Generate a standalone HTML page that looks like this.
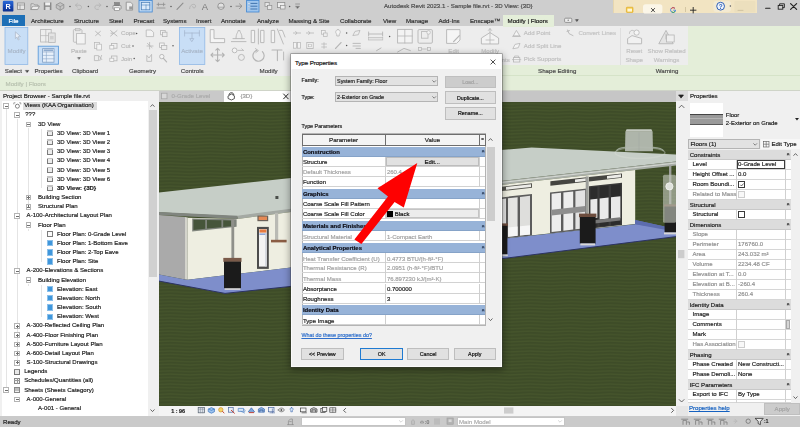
<!DOCTYPE html>
<html><head><meta charset="utf-8"><title>Autodesk Revit - Type Properties</title>
<style>
html,body{margin:0;padding:0;}
body{width:800px;height:427px;overflow:hidden;background:#d9d9d9;font-family:"Liberation Sans",sans-serif;font-size:5.35px;color:#1e1e1e;position:relative;}
.a{position:absolute;box-sizing:border-box;}
.t{position:absolute;white-space:nowrap;line-height:1;-webkit-text-stroke:0.18px currentColor;}
#root{position:absolute;left:0;top:0;width:800px;height:427px;opacity:.999;}
svg{position:absolute;overflow:visible;}
</style></head><body><div id="root">
<div class="a " style="left:0.00px;top:0.00px;width:800.00px;height:14.00px;background:#cecece;"></div>
<div class="a " style="left:0.00px;top:14.00px;width:800.00px;height:12.50px;background:#cecece;"></div>
<div class="a " style="left:0.00px;top:26.00px;width:800.00px;height:50.20px;background:#ededed;"></div>
<div class="a " style="left:687.50px;top:26.00px;width:112.50px;height:52.00px;background:#e4eed9;"></div>
<div class="a " style="left:502.00px;top:65.00px;width:298.00px;height:12.50px;background:#e4eed9;"></div>
<div class="a " style="left:0.00px;top:76.20px;width:800.00px;height:14.00px;background:#e4eed9;"></div>
<div class="a " style="left:0.00px;top:90.00px;width:800.00px;height:0.70px;background:#cfd4c8;"></div>
<div class="a " style="left:0.00px;top:90.50px;width:158.50px;height:10.50px;background:#efefef;"></div>
<div class="a " style="left:0.00px;top:101.00px;width:158.50px;height:315.00px;background:#f0f0f0;"></div>
<div class="a " style="left:1.50px;top:101.00px;width:146.50px;height:315.00px;background:#ffffff;"></div>
<div class="a " style="left:148.00px;top:101.00px;width:9.50px;height:304.50px;background:#f0f0f0;"></div>
<div class="a " style="left:158.50px;top:90.50px;width:529.00px;height:11.20px;background:#c6c6c6;"></div>
<div class="a " style="left:159.00px;top:101.60px;width:517.00px;height:304.00px;background:#3f4d29;overflow:hidden;"><svg class="a" style="left:0;top:0" width="517" height="303.9" viewBox="159 101.6 517 303.9">
<defs>
<pattern id="grass" width="40" height="3.3" patternUnits="userSpaceOnUse">
<rect width="40" height="3.3" fill="#3e4c28"/>
<path d="M0 1.2 Q10 0.4 20 1.2 T40 1.2" stroke="#46552c" stroke-width="1.2" fill="none"/>
</pattern>
</defs>
<rect x="159" y="101" width="517" height="305" fill="url(#grass)"/>
<!-- ===== left building ===== -->
<polygon points="159,192.2 291,177.5 291,209 237.5,216 159,211.8" fill="#c6cec7"/>
<polygon points="159,211.6 237.5,215.4 237.5,218.6 159,214.6" fill="#80857f"/>
<polygon points="237.5,215.4 291,208.3 291,211.6 237.5,218.6" fill="#a4a9a3"/>
<polygon points="159,214.6 185,216.6 185,279 159,274" fill="#aaaaaa"/>
<polygon points="185,216.6 187.8,217 187.8,279.3 185,279" fill="#d4d4cc"/>
<polygon points="187.8,217.4 237.5,218.6 291,211.6 291,267.2 223,275.2 187.8,279.3" fill="#eeeee1"/>
<!-- clerestory left -->
<polygon points="192.2,218 236.6,218.8 236.6,226.4 192.2,231" fill="#7f847c"/>
<polygon points="193.4,219.4 205.2,219.6 205.2,228.4 193.4,229.6" fill="#46553a"/>
<polygon points="207,219.6 221.4,219.8 221.4,226.8 207,228.2" fill="#46553a"/>
<polygon points="223.2,219.8 231,220 231,225.8 223.2,226.6" fill="#46553a"/>
<!-- post & pedestal left -->
<rect x="231.4" y="218.6" width="2.8" height="39.5" fill="#8f908a"/>
<rect x="223.3" y="257.5" width="18.2" height="4" fill="#7a5a49"/>
<rect x="224" y="261.4" width="17" height="26.4" fill="#1b1b1b"/>
<rect x="224.6" y="287.6" width="15.8" height="1.9" fill="#d9d9d9"/>
<!-- light + door -->
<rect x="257.4" y="215.2" width="10.8" height="5.6" fill="#6a6058"/>
<rect x="258.6" y="216.2" width="8.4" height="3.4" fill="#e58a55"/>
<rect x="257" y="226.5" width="11.8" height="42" fill="#4c4c4c"/>
<rect x="259" y="228.6" width="7.8" height="37.6" fill="#f3f3f3"/>
<rect x="259.4" y="229" width="7" height="3.2" fill="#e57a40"/>
<rect x="259.4" y="233" width="7" height="1.6" fill="#8fa6d8"/>
<rect x="265.2" y="233" width="1.4" height="33" fill="#cfd3da"/>
<!-- post2 + shelf -->
<rect x="275" y="212.4" width="3.2" height="27.4" fill="#b9bab4"/>
<rect x="271" y="239.4" width="15.6" height="2.6" fill="#8b5d44"/>
<rect x="275.4" y="195.6" width="3" height="3" fill="#4a4e4a"/>
<!-- slab left -->
<polygon points="159,274 185,279 187.8,279.3 223,275.2 291,267.2 291,286 225,293 159,280.7" fill="#7e8ecb"/>
<polyline points="159,280.7 225,293 291,286" fill="none" stroke="#2b3263" stroke-width="1"/>
<rect x="224.6" y="287.6" width="15.8" height="1.9" fill="#d9d9d9"/>
<rect x="224" y="261.4" width="17" height="26.4" fill="#1b1b1b"/>
<!-- ===== right building ===== -->
<polygon points="501,149.6 531.6,147 676,154 676,161.2 501,180.7" fill="#c6cec7"/>
<polygon points="501,180.7 676,161.2 676,165 501,184.5" fill="#a9aea8"/>
<polygon points="501,181.6 676,162.1 676,163.2 501,182.7" fill="#d6dad4"/>
<g transform="matrix(1 -0.1105 0 1 0 55.36)">
<!-- local: y' = y + (x-501)*0.1105 -->
<rect x="501" y="184.5" width="134.2" height="54" fill="#eeeee1"/>
<!-- upper windows -->
<rect x="502" y="186.4" width="30" height="4.4" fill="#55554f"/>
<rect x="506" y="187.2" width="25" height="2.8" fill="#ecece8"/>
<rect x="550.4" y="186.4" width="36.4" height="4.4" fill="#454541"/>
<rect x="575" y="187.2" width="10.8" height="2.8" fill="#ecece8"/>
<rect x="589" y="186.4" width="33" height="4.4" fill="#454541"/>
<rect x="607" y="187.2" width="14" height="2.8" fill="#ecece8"/>
<!-- lower group 1 -->
<rect x="501" y="197" width="31" height="41.5" fill="#5c5c5c"/>
<rect x="502" y="198.6" width="4" height="38.6" fill="#e6e6e6"/>
<rect x="508" y="198.6" width="9.6" height="38.6" fill="#e4e4e2"/>
<rect x="520" y="198.6" width="10" height="38.6" fill="#dededc"/>
<rect x="508" y="228" width="9.6" height="9.2" fill="#f6f6f6"/>
<rect x="520" y="228" width="10" height="9.2" fill="#f6f6f6"/>
<!-- lower group 2 -->
<rect x="550" y="197.5" width="37" height="41" fill="#5c5c5c"/>
<rect x="551.6" y="199" width="9.4" height="38.2" fill="#ededed"/>
<rect x="563.4" y="199" width="9.8" height="38.2" fill="#ededed"/>
<rect x="575.4" y="199" width="9.8" height="38.2" fill="#e2e2e2"/>
<rect x="551.6" y="215" width="33.6" height="5.6" fill="#8e8e8e"/>
<!-- lower group 3 -->
<rect x="589" y="195.6" width="33" height="42.4" fill="#3a3a3a"/>
<rect x="590.4" y="197" width="7" height="40" fill="#2c2c2c"/>
<rect x="599.6" y="197" width="9" height="40" fill="#2c2c2c"/>
<rect x="611" y="197" width="9.4" height="40" fill="#2c2c2c"/>
<rect x="590.4" y="209" width="7" height="19" fill="#e9e9e9"/>
<rect x="599.6" y="209" width="9" height="21" fill="#e9e9e9"/>
<rect x="611" y="209" width="9.4" height="22" fill="#e9e9e9"/>
<rect x="590.4" y="230" width="30" height="3.4" fill="#777"/>
</g>
<!-- slab right -->
<polygon points="635.2,219.6 676,228.6 676,236.2 635.2,241.4" fill="#6474b6"/>
<polygon points="501,238.7 635.2,223.9 676,229.4 676,236.2 501,258.4" fill="#7e8ecb"/>
<polygon points="635.2,219.6 676,228.6 676,231.4 635.2,223.9" fill="#5c6cae"/>
<polyline points="501,258.4 676,236.2" fill="none" stroke="#2b3263" stroke-width="1"/>
<!-- centre pedestal -->
<rect x="585.7" y="176" width="3" height="37.4" fill="#9c9e9a"/>
<rect x="579" y="213.2" width="17.4" height="3.6" fill="#6d4d3e"/>
<rect x="579.8" y="216.6" width="15.8" height="26.6" fill="#1b1b1b"/>
<rect x="580.4" y="243" width="14.6" height="2" fill="#d9d9d9"/>
<!-- right pedestal -->
<rect x="669" y="165" width="2.4" height="39" fill="#9c9e9a"/>
<rect x="664" y="204" width="12" height="2.4" fill="#6d4d3e"/>
<rect x="664.6" y="206.2" width="11.4" height="26" fill="#1b1b1b"/>
<rect x="664" y="232" width="12" height="2" fill="#d9d9d9"/>
<!-- left pedestal (right bldg) -->
<rect x="501" y="224.6" width="6.4" height="29.6" fill="#1b1b1b"/>
<rect x="501" y="223" width="7" height="2.4" fill="#6d4d3e"/>
<rect x="501" y="254" width="6.8" height="1.8" fill="#d9d9d9"/>
<!-- view cube -->
<ellipse cx="640" cy="152.4" rx="25" ry="5.6" fill="none" stroke="#d9ded8" stroke-width="1.4" opacity=".4"/><path d="M616.4 150.4C617.4 148.6 621 147.4 625 147" stroke="#9aa594" stroke-width="1.4" fill="none"/><path d="M663.6 150.6C662.6 148.8 659 147.4 653 147" stroke="#9aa594" stroke-width="1.4" fill="none"/>
<polygon points="625.4,131.4 652.6,131.4 653,150.8 625,150.8" fill="#b4bab1" opacity=".95"/>
<polygon points="626.6,128.8 651.4,128.8 652.6,131.4 625.4,131.4" fill="#cbd0c8" opacity=".95"/>
<line x1="639" y1="132" x2="639" y2="150.8" stroke="#a5aaa2" stroke-width=".6"/>
<!-- nav bar -->
<rect x="663" y="174.4" width="13" height="48" rx="1.5" fill="#c3c8bd" opacity=".62"/>
<circle cx="669.4" cy="186" r="3.6" fill="#dfe2dc" stroke="#f4f4f0" stroke-width=".8"/>
</svg>
</div>
<div class="a " style="left:676.00px;top:101.00px;width:11.50px;height:304.50px;background:#f0f0f0;"></div>
<div class="a " style="left:158.50px;top:405.50px;width:529.00px;height:10.50px;background:#f4f4f4;"></div>
<div class="a " style="left:687.50px;top:90.50px;width:112.50px;height:325.50px;background:#f0f0f0;"></div>
<div class="a " style="left:0.00px;top:416.00px;width:800.00px;height:11.00px;background:#cacaca;"></div>
<div class="a " style="left:614.00px;top:0.00px;width:143.00px;height:13.20px;background:#f2e4c2;"></div>
<div class="a " style="left:613.40px;top:0.00px;width:0.80px;height:13.20px;background:#e6d6ae;"></div>
<div class="a " style="left:685.00px;top:7.00px;width:0.60px;height:5.00px;background:#d4c6a2;"></div>
<div class="a " style="left:2.20px;top:15.20px;width:22.60px;height:10.40px;background:#1d6fb6;"></div>
<div class="a " style="left:502.70px;top:15.00px;width:51.00px;height:11.60px;background:#e4eed9;"></div>
<div class="a " style="left:620.40px;top:28.00px;width:0.60px;height:36.50px;background:#dedede;"></div>
<div class="a " style="left:502.00px;top:75.20px;width:298.00px;height:0.60px;background:#d5e3c8;"></div>
<div class="a " style="left:159.00px;top:90.80px;width:65.00px;height:10.90px;background:#c9c9c9;"></div>
<div class="a " style="left:224.00px;top:90.80px;width:74.00px;height:10.90px;background:#ffffff;"></div>
<div class="a " style="left:676.00px;top:90.50px;width:11.50px;height:10.50px;background:#dcdcdc;"></div>
<svg style="left:0;top:0" width="800" height="427" viewBox="0 0 800 427"><defs><linearGradient id="rg" x1="0" y1="0" x2="0" y2="1"><stop offset="0" stop-color="#2a6ad8"/><stop offset=".55" stop-color="#1546b4"/><stop offset="1" stop-color="#0c2f8c"/></linearGradient></defs><rect x="2.80" y="0.80" width="10.60" height="10.80" fill="url(#rg)" rx="1.2"/><text x="8" y="8.6" font-size="7.2" font-weight="bold" fill="#fff" text-anchor="middle" font-family="Liberation Sans, sans-serif">R</text><rect x="17.40" y="3.00" width="7.20" height="6.40" fill="#e6e6e6" stroke="#8e8e8e" stroke-width="0.8"/><path d="M17.4 5.0H24.6M20 5.0V9.4" stroke="#8e8e8e" stroke-width="0.7" fill="none" stroke-linecap="round" stroke-linejoin="round"/><path d="M31 9.2V3.8000000000000003H33.6L34.6 5.0H38V6.2" stroke="#8e8e8e" stroke-width="0.8" fill="#e4e4e4" stroke-linecap="round" stroke-linejoin="round"/><path d="M31 9.2L32.6 6.2H39.4L37.8 9.2Z" stroke="#8e8e8e" stroke-width="0.8" fill="#ececec" stroke-linecap="round" stroke-linejoin="round"/><rect x="43.80" y="2.40" width="7.60" height="7.60" fill="#8a8a8a"/><rect x="45.20" y="2.40" width="4.80" height="3.00" fill="#f0f0f0"/><rect x="45.40" y="6.80" width="4.40" height="3.20" fill="#dedede"/><path d="M56.6 4.6L60.2 2.6L63.800000000000004 4.6V8.2L60.2 10.2L56.6 8.2Z" stroke="#8e8e8e" stroke-width="0.8" fill="#c4c4c4" stroke-linecap="round" stroke-linejoin="round"/><path d="M56.6 4.6L60.2 6.6000000000000005L63.800000000000004 4.6M60.2 6.6000000000000005V10.2" stroke="#8e8e8e" stroke-width="0.7" fill="none" stroke-linecap="round" stroke-linejoin="round"/><circle cx="70.00" cy="6.40" r="0.75" fill="#555"/><path d="M75.6 5.2H80A2.2 2.2 0 0 1 80 9.4H78M77.4 3.4000000000000004L75.4 5.2L77.4 7.0" stroke="#b4b4b4" stroke-width="0.9" fill="none" stroke-linecap="round" stroke-linejoin="round"/><circle cx="88.40" cy="6.40" r="0.75" fill="#555"/><path d="M100.80000000000001 5.2H96.4A2.2 2.2 0 0 0 96.4 9.4H98.4M99.0 3.4000000000000004L101.0 5.2L99.0 7.0" stroke="#b4b4b4" stroke-width="0.9" fill="none" stroke-linecap="round" stroke-linejoin="round"/><circle cx="107.00" cy="6.40" r="0.75" fill="#555"/><rect x="113.00" y="5.40" width="8.00" height="3.80" fill="#e9e9e9" stroke="#848484" stroke-width="0.8" rx="0.8"/><rect x="114.60" y="2.60" width="4.80" height="3.00" fill="#8a8a8a" stroke="#7a7a7a" stroke-width="0.6"/><rect x="114.60" y="7.80" width="4.80" height="2.60" fill="#fff" stroke="#848484" stroke-width="0.6"/><path d="M126.6 2.2H130.6L132.6 4.2V10.2H126.6Z" stroke="#8e8e8e" stroke-width="0.8" fill="#ececec" stroke-linecap="round" stroke-linejoin="round"/><rect x="129.20" y="6.40" width="3.60" height="3.20" fill="#9a9a9a"/><rect x="139.00" y="0.40" width="13.20" height="11.60" fill="#bdd7f2" stroke="#3f86d2" stroke-width="0.8"/><rect x="141.40" y="2.60" width="8.40" height="7.20" fill="#dcebfa" stroke="#4a7fb8" stroke-width="0.7"/><path d="M141.4 5H149.8M146 5V9.8" stroke="#4a7fb8" stroke-width="0.6" fill="none" stroke-linecap="round" stroke-linejoin="round"/><path d="M157 4.4H165M157 8H165M158.4 3V5.8M163.6 3V5.8" stroke="#8e8e8e" stroke-width="0.8" fill="none" stroke-linecap="round" stroke-linejoin="round"/><circle cx="171.00" cy="6.40" r="0.75" fill="#555"/><path d="M177 9.4L183 3.2" stroke="#8e8e8e" stroke-width="1.1" fill="none" stroke-linecap="round" stroke-linejoin="round"/><path d="M189.6 8.6C189.6 4 195.6 3 195.6 6.2C195.6 8.4 192.6 8.6 192.6 6.6" stroke="#b0b0b0" stroke-width="0.9" fill="none" stroke-linecap="round" stroke-linejoin="round"/><text x="204.8" y="9.8" font-size="9.4" fill="#7a7a7a" text-anchor="middle" font-family="Liberation Sans, sans-serif">A</text><circle cx="221.00" cy="6.20" r="3.2" fill="#e2e2e2" stroke="#8e8e8e" stroke-width="0.9"/><path d="M218 7.2H224" stroke="#8e8e8e" stroke-width="0.7" fill="none" stroke-linecap="round" stroke-linejoin="round"/><circle cx="231.00" cy="6.40" r="0.75" fill="#555"/><path d="M236 6.2H241.4M239.4 3.8L242 6.2L239.4 8.6" stroke="#8e8e8e" stroke-width="0.9" fill="none" stroke-linecap="round" stroke-linejoin="round"/><rect x="246.60" y="0.40" width="12.40" height="11.60" fill="#9fc6ee" stroke="#3f86d2" stroke-width="0.8"/><path d="M248.6 3.4H257M248.6 6.2H257M248.6 9H257" stroke="#2a5f9e" stroke-width="0.8" fill="none" stroke-linecap="round" stroke-linejoin="round"/><path d="M248.4 3.4H250M248.4 6.2H250M248.4 9H250" stroke="#fff" stroke-width="0.8" fill="none" stroke-linecap="round" stroke-linejoin="round"/><rect x="265.00" y="2.60" width="4.20" height="4.00" fill="#e6e6e6" stroke="#8e8e8e" stroke-width="0.7"/><rect x="267.60" y="5.40" width="4.20" height="4.00" fill="#e6e6e6" stroke="#8e8e8e" stroke-width="0.7"/><rect x="277.40" y="2.40" width="7.40" height="5.20" fill="#ececec" stroke="#8e8e8e" stroke-width="0.8"/><rect x="280.40" y="5.40" width="4.60" height="3.60" fill="#ececec" stroke="#8e8e8e" stroke-width="0.7"/><circle cx="289.60" cy="6.40" r="0.75" fill="#555"/><path d="M295.6 4H299.6" stroke="#8e8e8e" stroke-width="0.8" fill="none" stroke-linecap="round" stroke-linejoin="round"/><path d="M295.6 6.2H299.6L297.6 8.6Z" stroke="#8e8e8e" stroke-width="0.5" fill="#666" stroke-linecap="round" stroke-linejoin="round"/><rect x="626.40" y="7.20" width="6.60" height="5.20" fill="#f6c940" stroke="#d9a520" stroke-width="0.6" rx="0.6"/><rect x="627.40" y="8.60" width="4.60" height="3.00" fill="#fff7d6"/><rect x="643.00" y="4.20" width="19.40" height="9.40" fill="#fbf6e8" rx="2.6"/><path d="M651.4 8.4L654.6 11.8M654.6 8.4L651.4 11.8" stroke="#222" stroke-width="0.8" fill="none" stroke-linecap="round" stroke-linejoin="round"/><path d="M675.6 10.2A2.5 2.5 0 1 1 674.9 8.3" stroke="#4a86e8" stroke-width="1" fill="none"/><path d="M671.2 8.7A2.5 2.5 0 0 1 674.9 8.3" stroke="#e04a3a" stroke-width="1" fill="none"/><path d="M671.6 11.8A2.5 2.5 0 0 0 675.1 11.4" stroke="#3aa757" stroke-width="1" fill="none"/><path d="M673.2 10.2H675.8" stroke="#4a86e8" stroke-width=".9"/><path d="M690.4 10.2H696M693.2 7.4V13" stroke="#222" stroke-width="0.9" fill="none" stroke-linecap="round" stroke-linejoin="round"/><rect x="713.40" y="1.00" width="17.60" height="11.00" fill="#f3ead2" rx="3"/><circle cx="720.60" cy="6.20" r="3.9" fill="#eef3fb" stroke="#2f5fb5" stroke-width="1"/><text x="720.6" y="8.5" font-size="6.4" font-weight="bold" fill="#2f5fb5" text-anchor="middle" font-family="Liberation Sans, sans-serif">?</text><circle cx="730.40" cy="6.00" r="0.75" fill="#555"/><rect x="734.40" y="1.00" width="21.00" height="11.60" fill="#ecdfbd" rx="1"/><path d="M738 10.4H743" stroke="#c9bd9a" stroke-width="0.8" fill="none" stroke-linecap="round" stroke-linejoin="round"/><path d="M765.6 8.2H770" stroke="#222" stroke-width="1.1" fill="none" stroke-linecap="round" stroke-linejoin="round"/><rect x="778.20" y="5.40" width="4.60" height="3.80" fill="none" stroke="#222" stroke-width="0.9"/><path d="M779.6 5.4V3.8H784.4V7.6H782.8" stroke="#222" stroke-width="0.9" fill="none" stroke-linecap="round" stroke-linejoin="round"/><path d="M790.6 3.6L796.6 9.4M796.6 3.6L790.6 9.4" stroke="#222" stroke-width="1.2" fill="none" stroke-linecap="round" stroke-linejoin="round"/><rect x="564.60" y="18.20" width="7.20" height="4.20" fill="#ececec" stroke="#777" stroke-width="0.7" rx="1"/><circle cx="568.20" cy="20.30" r="0.7" fill="#777"/><path d="M575.6 19.6H578.4L577 21.4Z" stroke="#444" stroke-width="0.4" fill="#444" stroke-linecap="round" stroke-linejoin="round"/><rect x="5.00" y="27.40" width="22.80" height="37.00" fill="#c8def6" stroke="#8fb8e6" stroke-width="0.8"/><path d="M15.4 32.2V38.6L17 37.2L18.2 40L19.2 39.5L18 36.8L20.2 36.6Z" stroke="#aab6c6" stroke-width="0.7" fill="#e9eff7" stroke-linecap="round" stroke-linejoin="round"/><rect x="40.60" y="29.40" width="10.60" height="12.60" fill="#eeeeee" stroke="#b6b6b6" stroke-width="0.8"/><path d="M40.6 35.6H51.2M45.8 29.4V42" stroke="#b6b6b6" stroke-width="0.7" fill="none" stroke-linecap="round" stroke-linejoin="round"/><rect x="48.60" y="33.00" width="6.60" height="9.40" fill="#e4e4e4" stroke="#b6b6b6" stroke-width="0.8"/><rect x="50.00" y="36.00" width="3.60" height="3.40" fill="#cfcfcf"/><rect x="38.20" y="46.20" width="20.20" height="18.00" fill="#c8def6" stroke="#5d9ada" stroke-width="0.9"/><rect x="42.60" y="48.60" width="11.40" height="13.60" fill="#e8f0fa" stroke="#7f9fc4" stroke-width="0.8"/><path d="M42.6 52H54M42.6 55.4H54M42.6 58.8H54M46.4 52V62.2" stroke="#8aa6c8" stroke-width="0.6" fill="none" stroke-linecap="round" stroke-linejoin="round"/><rect x="43.60" y="49.40" width="9.40" height="1.80" fill="#8eaacd"/><rect x="73.40" y="29.60" width="8.60" height="12.60" fill="#ebebeb" stroke="#b6b6b6" stroke-width="0.8" rx="0.8"/><rect x="76.60" y="33.40" width="8.60" height="10.60" fill="#f3f3f3" stroke="#b6b6b6" stroke-width="0.8"/><rect x="75.40" y="28.40" width="4.60" height="2.40" fill="#d9d9d9" stroke="#b6b6b6" stroke-width="0.6"/><path d="M77.8 57.6H80.4L79.1 59.2Z" stroke="#555" stroke-width="0.4" fill="#555" stroke-linecap="round" stroke-linejoin="round"/><path d="M95.6 31.4L100.4 35.6M100.4 31.4L95.6 35.6" stroke="#b6b6b6" stroke-width="0.9" fill="none" stroke-linecap="round" stroke-linejoin="round"/><rect x="94.60" y="42.60" width="4.80" height="5.80" fill="#efefef" stroke="#b6b6b6" stroke-width="0.7"/><rect x="96.80" y="44.20" width="4.80" height="5.80" fill="#f5f5f5" stroke="#b6b6b6" stroke-width="0.7"/><path d="M94.8 55.6H98.6V60.6H94.8ZM99.4 56.2L101.8 59.6M101.6 55.4L99.8 60.6" stroke="#b6b6b6" stroke-width="0.8" fill="none" stroke-linecap="round" stroke-linejoin="round"/><path d="M110.6 30.6L117 36M117 30.6L110.6 36M111 33.2H113" stroke="#b6b6b6" stroke-width="0.9" fill="none" stroke-linecap="round" stroke-linejoin="round"/><circle cx="136.60" cy="33.40" r="0.75" fill="#555"/><rect x="111.40" y="43.40" width="5.60" height="4.80" fill="#efefef" stroke="#b6b6b6" stroke-width="0.8"/><rect x="109.80" y="45.60" width="4.00" height="3.40" fill="#f5f5f5" stroke="#b6b6b6" stroke-width="0.7"/><circle cx="133.00" cy="46.00" r="0.75" fill="#555"/><rect x="111.40" y="56.00" width="5.60" height="4.80" fill="#efefef" stroke="#b6b6b6" stroke-width="0.8"/><rect x="109.80" y="58.20" width="4.00" height="3.40" fill="#f5f5f5" stroke="#b6b6b6" stroke-width="0.7"/><circle cx="134.20" cy="58.60" r="0.75" fill="#555"/><path d="M146.6 30H151L153.6 32.4V36.6H146.6Z" stroke="#b6b6b6" stroke-width="0.8" fill="#f3f3f3" stroke-linecap="round" stroke-linejoin="round"/><rect x="160.60" y="30.40" width="4.60" height="4.40" fill="#f3f3f3" stroke="#b6b6b6" stroke-width="0.8"/><rect x="162.40" y="32.20" width="4.60" height="4.40" fill="#ededed" stroke="#b6b6b6" stroke-width="0.8"/><path d="M147.4 43.4L152 47.6M149.6 42.4V49M147 46H153" stroke="#b6b6b6" stroke-width="0.8" fill="none" stroke-linecap="round" stroke-linejoin="round"/><rect x="159.60" y="43.00" width="4.60" height="4.40" fill="#f3f3f3" stroke="#b6b6b6" stroke-width="0.8"/><rect x="161.40" y="45.40" width="5.40" height="4.00" fill="#ededed" stroke="#b6b6b6" stroke-width="0.8"/><circle cx="173.00" cy="45.80" r="0.75" fill="#555"/><path d="M146.8 61V55.4L149 58L151.6 54.4V61Z" stroke="#b6b6b6" stroke-width="0.8" fill="#ededed" stroke-linecap="round" stroke-linejoin="round"/><circle cx="161.80" cy="56.60" r="2.2" fill="#f3f3f3" stroke="#b6b6b6" stroke-width="0.9"/><path d="M163.4 58.4L166.6 61.8" stroke="#b6b6b6" stroke-width="1.2" fill="none" stroke-linecap="round" stroke-linejoin="round"/><rect x="179.40" y="27.40" width="25.40" height="37.00" fill="#c8def6" stroke="#8fb8e6" stroke-width="0.8"/><path d="M184.6 30.6V36M199.4 30.6V36M184.6 33H199.4M192 33V38.6M190.2 38.6H193.8L192 41.4Z" stroke="#a6b8cf" stroke-width="0.8" fill="none" stroke-linecap="round" stroke-linejoin="round"/><path d="M210.6 29.6H214V38.6H224.6V42.6H210.6Z" stroke="#b6b6b6" stroke-width="0.9" fill="#f5f5f5" stroke-linecap="round" stroke-linejoin="round"/><path d="M231.4 41.6H246M233 38.6H244.4M236 38.6C236 33 238 33 238 30.6H240C240 33 242 33 242 38.6" stroke="#b6b6b6" stroke-width="0.9" fill="none" stroke-linecap="round" stroke-linejoin="round"/><path d="M251.6 30.4H254.6V42.6H251.6ZM258.4 29V44M261 30.4H264V42.6H261Z" stroke="#b6b6b6" stroke-width="0.9" fill="#f3f3f3" stroke-linecap="round" stroke-linejoin="round"/><path d="M271.6 30.4H274.6V42.6H271.6ZM277.4 29L283.4 44M279.6 30.4H282.4L285 37" stroke="#b6b6b6" stroke-width="0.9" fill="#f3f3f3" stroke-linecap="round" stroke-linejoin="round"/><path d="M217.6 48.4V61.6M211 55H224.2M215.8 50.2L217.6 48.4L219.4 50.2M215.8 59.8L217.6 61.6L219.4 59.8M212.8 53.2L211 55L212.8 56.8M222.4 53.2L224.2 55L222.4 56.8" stroke="#b2b2b2" stroke-width="1.1" fill="none" stroke-linecap="round" stroke-linejoin="round"/><circle cx="234.60" cy="50.40" r="2.4" fill="#f3f3f3" stroke="#b6b6b6" stroke-width="0.9"/><circle cx="241.40" cy="57.40" r="3" fill="#ececec" stroke="#b6b6b6" stroke-width="0.9"/><path d="M238 50.4H243.4M241.8 48.8L243.4 50.4" stroke="#b6b6b6" stroke-width="0.8" fill="none" stroke-linecap="round" stroke-linejoin="round"/><path d="M262.4 51.6A5.6 5.6 0 1 1 256.6 50.4" stroke="#b6b6b6" stroke-width="1.2" fill="none" stroke-linecap="round" stroke-linejoin="round"/><path d="M255.4 48.6L258.4 50.6L255.8 52.6" stroke="#b6b6b6" stroke-width="0.9" fill="none" stroke-linecap="round" stroke-linejoin="round"/><path d="M272 50H282M277.4 50V60.6" stroke="#b6b6b6" stroke-width="1.1" fill="none" stroke-linecap="round" stroke-linejoin="round"/><path d="M283.6 52V60" stroke="#b6b6b6" stroke-width="0.9" fill="none" stroke-linecap="round" stroke-linejoin="round"/><path d="M293.4 33H300.6M295.6 31.4L297 33L295.6 34.6" stroke="#b6b6b6" stroke-width="0.8" fill="none" stroke-linecap="round" stroke-linejoin="round"/><path d="M306.4 33H313.6M308.6 31.4L310 33L308.6 34.6" stroke="#b6b6b6" stroke-width="0.8" fill="none" stroke-linecap="round" stroke-linejoin="round"/><rect x="321.60" y="30.60" width="3.60" height="3.60" fill="#f3f3f3" stroke="#b6b6b6" stroke-width="0.7"/><rect x="323.60" y="33.00" width="3.60" height="3.60" fill="#ededed" stroke="#b6b6b6" stroke-width="0.7"/><path d="M338 29.6C335.4 29.6 335 33 336.8 34.2V36H339.2V34.2C341 33 340.6 29.6 338 29.6Z" stroke="#b6b6b6" stroke-width="0.8" fill="#f5f5f5" stroke-linecap="round" stroke-linejoin="round"/><circle cx="346.60" cy="33.00" r="0.75" fill="#555"/><path d="M353 35.2L355 31.4L360 30.4L358.4 34.4Z" stroke="#b6b6b6" stroke-width="0.8" fill="#ededed" stroke-linecap="round" stroke-linejoin="round"/><rect x="293.60" y="42.40" width="2.80" height="5.80" fill="#f3f3f3" stroke="#b6b6b6" stroke-width="0.7"/><rect x="297.60" y="42.40" width="2.80" height="5.80" fill="#f3f3f3" stroke="#b6b6b6" stroke-width="0.7"/><rect x="306.80" y="42.40" width="6.40" height="6.00" fill="#f3f3f3" stroke="#b6b6b6" stroke-width="0.8"/><rect x="308.60" y="44.20" width="2.80" height="2.60" fill="none" stroke="#b6b6b6" stroke-width="0.6"/><path d="M321.6 44H326.6M321.6 47H326.6M324 42.6V48.4" stroke="#b6b6b6" stroke-width="0.7" fill="none" stroke-linecap="round" stroke-linejoin="round"/><path d="M335.6 48.4L341 42.6" stroke="#b6b6b6" stroke-width="1.3" fill="none" stroke-linecap="round" stroke-linejoin="round"/><circle cx="346.60" cy="45.60" r="0.75" fill="#555"/><path d="M353 43.4H360.4M353 46H360.4M356 48.4H360.4" stroke="#b6b6b6" stroke-width="0.9" fill="none" stroke-linecap="round" stroke-linejoin="round"/><path d="M368.6 34H382.6M368.6 32V36M382.6 32V36" stroke="#b6b6b6" stroke-width="0.9" fill="none" stroke-linecap="round" stroke-linejoin="round"/><rect x="368.40" y="37.40" width="14.40" height="2.60" fill="#e4e4e4" stroke="#b6b6b6" stroke-width="0.6"/><circle cx="389.60" cy="36.40" r="0.75" fill="#555"/><path d="M376.6 50.6L381 48" stroke="#b6b6b6" stroke-width="0.9" fill="none" stroke-linecap="round" stroke-linejoin="round"/><rect x="397.60" y="29.40" width="14.60" height="13.60" fill="#f3f3f3" stroke="#b6b6b6" stroke-width="0.9"/><path d="M397.6 36H412.2M404.8 29.4V43" stroke="#b6b6b6" stroke-width="0.8" fill="none" stroke-linecap="round" stroke-linejoin="round"/><rect x="418.00" y="29.60" width="14.40" height="13.60" fill="none" stroke="#b6b6b6" stroke-width="0.9" rx="1.2"/><rect x="421.40" y="31.60" width="6.60" height="6.60" fill="#ededed" stroke="#b6b6b6" stroke-width="0.8"/><circle cx="428.60" cy="32.40" r="1.8" fill="#f3f3f3" stroke="#b6b6b6" stroke-width="0.7"/><path d="M397.6 52L404 48.4L410.4 50.6" stroke="#b6b6b6" stroke-width="0.9" fill="none" stroke-linecap="round" stroke-linejoin="round"/><rect x="418.60" y="47.60" width="2.80" height="2.80" fill="none" stroke="#b6b6b6" stroke-width="0.7"/><path d="M422.4 49H426.4" stroke="#b6b6b6" stroke-width="0.7" fill="none" stroke-linecap="round" stroke-linejoin="round"/><rect x="427.60" y="47.60" width="2.80" height="2.80" fill="none" stroke="#b6b6b6" stroke-width="0.7"/><path d="M447 29.6H460V40L456.6 43.4H447Z" stroke="#b6b6b6" stroke-width="0.9" fill="#f5f5f5" stroke-linecap="round" stroke-linejoin="round"/><path d="M453.6 41.6L459.4 35.6" stroke="#b6b6b6" stroke-width="1.3" fill="none" stroke-linecap="round" stroke-linejoin="round"/><path d="M481.4 43.6V38L490 32.6L498.6 38V43.6Z" stroke="#b6b6b6" stroke-width="0.9" fill="#f3f3f3" stroke-linecap="round" stroke-linejoin="round"/><path d="M490 28.6V43.6M488.4 30.4L490 28.6L491.6 30.4M486 40H494" stroke="#b6b6b6" stroke-width="0.8" fill="none" stroke-linecap="round" stroke-linejoin="round"/><path d="M513.4 35.6L516.4 30.4L519.6 35.6ZM512.6 36.4H520.4" stroke="#b6b6b6" stroke-width="0.8" fill="#f5f5f5" stroke-linecap="round" stroke-linejoin="round"/><path d="M513 48.4L515 44.4L520 43.4L518.4 47.4Z" stroke="#b6b6b6" stroke-width="0.8" fill="#f5f5f5" stroke-linecap="round" stroke-linejoin="round"/><rect x="513.40" y="57.60" width="6.40" height="4.40" fill="#f3f3f3" stroke="#b6b6b6" stroke-width="0.8"/><path d="M514.6 57.6V56H518.6V57.6M512.4 59.6H520.8" stroke="#b6b6b6" stroke-width="0.7" fill="none" stroke-linecap="round" stroke-linejoin="round"/><path d="M567.6 30L569 33.6L573 35.6M567 31.4L569.4 30.6" stroke="#b6b6b6" stroke-width="0.9" fill="none" stroke-linecap="round" stroke-linejoin="round"/><path d="M627.6 43.4V38.6L632 35.6L641.6 38.4V43.4Z" stroke="#b6b6b6" stroke-width="0.9" fill="#f1f1f1" stroke-linecap="round" stroke-linejoin="round"/><circle cx="636.60" cy="32.60" r="2.6" fill="#f5f5f5" stroke="#b6b6b6" stroke-width="0.8"/><path d="M629.4 33.4C629.4 30.4 632.6 29.4 634 31" stroke="#b6b6b6" stroke-width="0.8" fill="none" stroke-linecap="round" stroke-linejoin="round"/><path d="M659 43.4L666 30.4L673 43.4Z" stroke="#b6b6b6" stroke-width="0.9" fill="#e4e4e4" stroke-linecap="round" stroke-linejoin="round"/><rect x="666.60" y="35.00" width="7.60" height="7.00" fill="#efefef" stroke="#b6b6b6" stroke-width="0.8"/><path d="M666 34V39" stroke="#b6b6b6" stroke-width="0.9" fill="none" stroke-linecap="round" stroke-linejoin="round"/><path d="M25.6 70.4H28.8L27.2 72.4Z" stroke="#333" stroke-width="0.4" fill="#333" stroke-linecap="round" stroke-linejoin="round"/><rect x="161.60" y="93.20" width="5.40" height="5.60" fill="#d8d8d8" stroke="#a2a2a2" stroke-width="0.7"/><path d="M228.4 95.8L231.4 94L234.4 95.8V98.6L231.4 100L228.4 98.6Z" stroke="#333" stroke-width="0.8" fill="#fff" stroke-linecap="round" stroke-linejoin="round"/><path d="M229 94.6C229 92 233.8 92 233.8 94.6" stroke="#333" stroke-width="0.9" fill="none" stroke-linecap="round" stroke-linejoin="round"/><path d="M283.6 94L288.2 98.8M288.2 94L283.6 98.8" stroke="#111" stroke-width="0.9" fill="none" stroke-linecap="round" stroke-linejoin="round"/><path d="M679 95H683.4L681.2 97.8Z" stroke="#222" stroke-width="0.4" fill="#222" stroke-linecap="round" stroke-linejoin="round"/><path d="M679 95H683.4L681.2 97.8Z" stroke="#222" stroke-width="0.4" fill="#222" stroke-linecap="round" stroke-linejoin="round"/><path d="M679.2 107.6L681.6 105.2L684 107.6" stroke="#444" stroke-width="0.8" fill="none" stroke-linecap="round" stroke-linejoin="round"/><path d="M679.2 399.6L681.6 402L684 399.6" stroke="#444" stroke-width="0.8" fill="none" stroke-linecap="round" stroke-linejoin="round"/><rect x="678.00" y="250.00" width="6.40" height="8.20" fill="#cdcdcd"/></svg>
<div class="t" style="top:2.99px;font-size:6.1px;left:384.00px;color:#4a4a4a;">Autodesk Revit 2023.1 - Sample file.rvt - 3D View: {3D}</div>
<div class="t" style="top:18.05px;font-size:6.2px;left:13.50px;transform:translateX(-50%);color:#ffffff;">File</div>
<div class="t" style="top:18.07px;font-size:6.15px;left:31.00px;color:#303030;">Architecture</div>
<div class="t" style="top:18.07px;font-size:6.15px;left:74.00px;color:#303030;">Structure</div>
<div class="t" style="top:18.07px;font-size:6.15px;left:109.00px;color:#303030;">Steel</div>
<div class="t" style="top:18.07px;font-size:6.15px;left:133.50px;color:#303030;">Precast</div>
<div class="t" style="top:18.07px;font-size:6.15px;left:163.00px;color:#303030;">Systems</div>
<div class="t" style="top:18.07px;font-size:6.15px;left:196.00px;color:#303030;">Insert</div>
<div class="t" style="top:18.07px;font-size:6.15px;left:221.00px;color:#303030;">Annotate</div>
<div class="t" style="top:18.07px;font-size:6.15px;left:257.00px;color:#303030;">Analyze</div>
<div class="t" style="top:18.07px;font-size:6.15px;left:288.50px;color:#303030;">Massing &amp; Site</div>
<div class="t" style="top:18.07px;font-size:6.15px;left:340.00px;color:#303030;">Collaborate</div>
<div class="t" style="top:18.07px;font-size:6.15px;left:383.00px;color:#303030;">View</div>
<div class="t" style="top:18.07px;font-size:6.15px;left:406.00px;color:#303030;">Manage</div>
<div class="t" style="top:18.07px;font-size:6.15px;left:438.50px;color:#303030;">Add-Ins</div>
<div class="t" style="top:18.07px;font-size:6.15px;left:470.00px;color:#303030;">Enscape™</div>
<div class="t" style="top:18.07px;font-size:6.15px;left:507.60px;color:#1e1e1e;">Modify | Floors</div>
<div class="t" style="top:47.79px;font-size:6.1px;left:16.60px;transform:translateX(-50%);color:#a9b7c9;">Modify</div>
<div class="t" style="top:48.39px;font-size:6.1px;left:78.80px;transform:translateX(-50%);color:#b9b9b9;">Paste</div>
<div class="t" style="top:30.39px;font-size:6.1px;left:121.00px;color:#bababa;">Cope</div>
<div class="t" style="top:42.99px;font-size:6.1px;left:121.00px;color:#bababa;">Cut</div>
<div class="t" style="top:55.59px;font-size:6.1px;left:121.00px;color:#bababa;">Join</div>
<div class="t" style="top:47.99px;font-size:6.1px;left:192.00px;transform:translateX(-50%);color:#a9b7c9;">Activate</div>
<div class="t" style="top:48.19px;font-size:6.1px;left:453.60px;transform:translateX(-50%);color:#c2c2c2;">Edit</div>
<div class="t" style="top:48.19px;font-size:6.1px;left:490.20px;transform:translateX(-50%);color:#c2c2c2;">Modify</div>
<div class="t" style="top:56.59px;font-size:6.1px;left:501.60px;color:#c2c2c2;">nts</div>
<div class="t" style="top:30.39px;font-size:6.1px;left:523.80px;color:#c0c0c0;">Add Point</div>
<div class="t" style="top:43.29px;font-size:6.1px;left:523.80px;color:#c0c0c0;">Add Split Line</div>
<div class="t" style="top:56.49px;font-size:6.1px;left:523.80px;color:#c0c0c0;">Pick Supports</div>
<div class="t" style="top:30.39px;font-size:6.1px;left:578.40px;color:#c4c4c4;">Convert Lines</div>
<div class="t" style="top:48.19px;font-size:6.1px;left:634.20px;transform:translateX(-50%);color:#c2c2c2;">Reset</div>
<div class="t" style="top:56.59px;font-size:6.1px;left:634.20px;transform:translateX(-50%);color:#c2c2c2;">Shape</div>
<div class="t" style="top:48.19px;font-size:6.1px;left:666.60px;transform:translateX(-50%);color:#c2c2c2;">Show Related</div>
<div class="t" style="top:56.59px;font-size:6.1px;left:666.60px;transform:translateX(-50%);color:#c2c2c2;">Warnings</div>
<div class="t" style="top:68.27px;font-size:6.15px;left:4.80px;color:#4a4a4a;">Select</div>
<div class="t" style="top:68.27px;font-size:6.15px;left:34.50px;color:#4a4a4a;">Properties</div>
<div class="t" style="top:68.27px;font-size:6.15px;left:72.00px;color:#4a4a4a;">Clipboard</div>
<div class="t" style="top:68.27px;font-size:6.15px;left:129.00px;color:#4a4a4a;">Geometry</div>
<div class="t" style="top:68.27px;font-size:6.15px;left:180.80px;color:#4a4a4a;">Controls</div>
<div class="t" style="top:68.27px;font-size:6.15px;left:259.60px;color:#4a4a4a;">Modify</div>
<div class="t" style="top:68.27px;font-size:6.15px;left:557.20px;transform:translateX(-50%);color:#4a4a4a;">Shape Editing</div>
<div class="t" style="top:68.27px;font-size:6.15px;left:667.00px;transform:translateX(-50%);color:#4a4a4a;">Warning</div>
<div class="t" style="top:80.97px;font-size:6.15px;left:5.60px;color:#b9c2b0;">Modify | Floors</div>
<div class="t" style="top:93.49px;font-size:6.1px;left:171.60px;color:#ababab;">0-Grade Level</div>
<div class="t" style="top:93.49px;font-size:6.1px;left:240.40px;color:#9a9a9a;">{3D}</div>
<div class="t" style="top:93.39px;font-size:6.1px;left:3.00px;color:#222;">Project Browser - Sample file.rvt</div>
<div class="a " style="left:22.50px;top:101.60px;width:74.50px;height:8.80px;background:#dedede;"></div>
<div class="a " style="left:148.60px;top:110.00px;width:8.40px;height:167.00px;background:#d0d0d0;"></div>
<svg style="left:150.2px;top:103.6px" width="5" height="3.2" viewBox="0 0 5 3.2"><path d="M0.5 2.7L2.5 0.6L4.5 2.7" stroke="#444" stroke-width=".8" fill="none"/></svg>
<svg style="left:150.2px;top:408.6px" width="5" height="3.2" viewBox="0 0 5 3.2"><path d="M0.5 0.5L2.5 2.6L4.5 0.5" stroke="#444" stroke-width=".8" fill="none"/></svg>
<div class="a " style="left:6.00px;top:109.47px;width:0.50px;height:280.60px;background:#e4e4e4;"></div>
<div class="a " style="left:17.00px;top:118.64px;width:0.50px;height:243.92px;background:#e4e4e4;"></div>
<div class="a " style="left:28.30px;top:127.81px;width:0.50px;height:1.83px;background:#e4e4e4;"></div>
<div class="a " style="left:40.50px;top:128.72px;width:0.50px;height:59.60px;background:#e4e4e4;"></div>
<div class="a " style="left:28.30px;top:127.81px;width:0.50px;height:78.86px;background:#e4e4e4;"></div>
<div class="a " style="left:28.30px;top:228.68px;width:0.50px;height:1.83px;background:#e4e4e4;"></div>
<div class="a " style="left:40.50px;top:229.59px;width:0.50px;height:32.09px;background:#e4e4e4;"></div>
<div class="a " style="left:40.50px;top:284.62px;width:0.50px;height:32.09px;background:#e4e4e4;"></div>
<div class="a " style="left:28.30px;top:283.70px;width:0.50px;height:1.83px;background:#e4e4e4;"></div>
<div class="a " style="left:3.20px;top:103.20px;width:5.60px;height:5.60px;background:#fff;border:0.6px solid #b4b4b4;"></div>
<div class="a " style="left:4.50px;top:105.70px;width:3.00px;height:0.60px;background:#6e6e6e;"></div>
<div class="t" style="top:102.32px;font-size:6.05px;left:24.20px;color:#1c1c1c;">Views (KAA Organisation)</div>
<div class="a " style="left:14.20px;top:112.37px;width:5.60px;height:5.60px;background:#fff;border:0.6px solid #b4b4b4;"></div>
<div class="a " style="left:15.50px;top:114.87px;width:3.00px;height:0.60px;background:#6e6e6e;"></div>
<div class="t" style="top:111.49px;font-size:6.05px;left:25.20px;color:#1c1c1c;">???</div>
<div class="a " style="left:25.50px;top:121.54px;width:5.60px;height:5.60px;background:#fff;border:0.6px solid #b4b4b4;"></div>
<div class="a " style="left:26.80px;top:124.04px;width:3.00px;height:0.60px;background:#6e6e6e;"></div>
<div class="t" style="top:120.66px;font-size:6.05px;left:38.00px;color:#1c1c1c;">3D View</div>
<div class="a " style="left:46.60px;top:130.11px;width:6.00px;height:6.20px;background:#ececec;border:0.7px solid #7c7c7c;"></div>
<div class="a " style="left:46.60px;top:130.11px;width:6.00px;height:1.60px;background:#c4c4c4;"></div>
<div class="t" style="top:129.83px;font-size:6.05px;left:57.00px;color:#1c1c1c;">3D View: 3D View 1</div>
<div class="a " style="left:46.60px;top:139.28px;width:6.00px;height:6.20px;background:#ececec;border:0.7px solid #7c7c7c;"></div>
<div class="a " style="left:46.60px;top:139.28px;width:6.00px;height:1.60px;background:#c4c4c4;"></div>
<div class="t" style="top:139.00px;font-size:6.05px;left:57.00px;color:#1c1c1c;">3D View: 3D View 2</div>
<div class="a " style="left:46.60px;top:148.45px;width:6.00px;height:6.20px;background:#ececec;border:0.7px solid #7c7c7c;"></div>
<div class="a " style="left:46.60px;top:148.45px;width:6.00px;height:1.60px;background:#c4c4c4;"></div>
<div class="t" style="top:148.17px;font-size:6.05px;left:57.00px;color:#1c1c1c;">3D View: 3D View 3</div>
<div class="a " style="left:46.60px;top:157.62px;width:6.00px;height:6.20px;background:#ececec;border:0.7px solid #7c7c7c;"></div>
<div class="a " style="left:46.60px;top:157.62px;width:6.00px;height:1.60px;background:#c4c4c4;"></div>
<div class="t" style="top:157.34px;font-size:6.05px;left:57.00px;color:#1c1c1c;">3D View: 3D View 4</div>
<div class="a " style="left:46.60px;top:166.79px;width:6.00px;height:6.20px;background:#ececec;border:0.7px solid #7c7c7c;"></div>
<div class="a " style="left:46.60px;top:166.79px;width:6.00px;height:1.60px;background:#c4c4c4;"></div>
<div class="t" style="top:166.51px;font-size:6.05px;left:57.00px;color:#1c1c1c;">3D View: 3D View 5</div>
<div class="a " style="left:46.60px;top:175.96px;width:6.00px;height:6.20px;background:#ececec;border:0.7px solid #7c7c7c;"></div>
<div class="a " style="left:46.60px;top:175.96px;width:6.00px;height:1.60px;background:#c4c4c4;"></div>
<div class="t" style="top:175.68px;font-size:6.05px;left:57.00px;color:#1c1c1c;">3D View: 3D View 6</div>
<div class="a " style="left:46.60px;top:185.13px;width:6.00px;height:6.20px;background:#ececec;border:0.7px solid #7c7c7c;"></div>
<div class="a " style="left:46.60px;top:185.13px;width:6.00px;height:1.60px;background:#c4c4c4;"></div>
<div class="t" style="top:184.85px;font-size:6.05px;left:57.00px;color:#1c1c1c;font-weight:bold;">3D View: {3D}</div>
<div class="a " style="left:25.50px;top:194.90px;width:5.60px;height:5.60px;background:#fff;border:0.6px solid #b4b4b4;"></div>
<div class="a " style="left:26.80px;top:197.40px;width:3.00px;height:0.60px;background:#6e6e6e;"></div>
<div class="a " style="left:28.00px;top:196.20px;width:0.60px;height:3.00px;background:#6e6e6e;"></div>
<div class="t" style="top:194.02px;font-size:6.05px;left:38.00px;color:#1c1c1c;">Building Section</div>
<div class="a " style="left:25.50px;top:204.07px;width:5.60px;height:5.60px;background:#fff;border:0.6px solid #b4b4b4;"></div>
<div class="a " style="left:26.80px;top:206.57px;width:3.00px;height:0.60px;background:#6e6e6e;"></div>
<div class="a " style="left:28.00px;top:205.37px;width:0.60px;height:3.00px;background:#6e6e6e;"></div>
<div class="t" style="top:203.19px;font-size:6.05px;left:38.00px;color:#1c1c1c;">Structural Plan</div>
<div class="a " style="left:14.20px;top:213.24px;width:5.60px;height:5.60px;background:#fff;border:0.6px solid #b4b4b4;"></div>
<div class="a " style="left:15.50px;top:215.74px;width:3.00px;height:0.60px;background:#6e6e6e;"></div>
<div class="t" style="top:212.36px;font-size:6.05px;left:26.60px;color:#1c1c1c;">A-100-Architectural Layout Plan</div>
<div class="a " style="left:25.50px;top:222.41px;width:5.60px;height:5.60px;background:#fff;border:0.6px solid #b4b4b4;"></div>
<div class="a " style="left:26.80px;top:224.91px;width:3.00px;height:0.60px;background:#6e6e6e;"></div>
<div class="t" style="top:221.53px;font-size:6.05px;left:38.00px;color:#1c1c1c;">Floor Plan</div>
<div class="a " style="left:46.60px;top:230.98px;width:6.00px;height:6.20px;background:#fbfbfb;border:0.7px solid #7c7c7c;"></div>
<div class="t" style="top:230.70px;font-size:6.05px;left:57.00px;color:#1c1c1c;">Floor Plan: 0-Grade Level</div>
<div class="a " style="left:46.60px;top:240.15px;width:6.00px;height:6.20px;background:#3f97dc;border:0.6px solid #8cc0ea;"></div>
<div class="t" style="top:239.87px;font-size:6.05px;left:57.00px;color:#1c1c1c;">Floor Plan: 1-Bottom Eave</div>
<div class="a " style="left:46.60px;top:249.32px;width:6.00px;height:6.20px;background:#3f97dc;border:0.6px solid #8cc0ea;"></div>
<div class="t" style="top:249.04px;font-size:6.05px;left:57.00px;color:#1c1c1c;">Floor Plan: 2-Top Eave</div>
<div class="a " style="left:46.60px;top:258.49px;width:6.00px;height:6.20px;background:#3f97dc;border:0.6px solid #8cc0ea;"></div>
<div class="t" style="top:258.21px;font-size:6.05px;left:57.00px;color:#1c1c1c;">Floor Plan: Site</div>
<div class="a " style="left:14.20px;top:268.26px;width:5.60px;height:5.60px;background:#fff;border:0.6px solid #b4b4b4;"></div>
<div class="a " style="left:15.50px;top:270.76px;width:3.00px;height:0.60px;background:#6e6e6e;"></div>
<div class="t" style="top:267.38px;font-size:6.05px;left:26.60px;color:#1c1c1c;">A-200-Elevations &amp; Sections</div>
<div class="a " style="left:25.50px;top:277.43px;width:5.60px;height:5.60px;background:#fff;border:0.6px solid #b4b4b4;"></div>
<div class="a " style="left:26.80px;top:279.93px;width:3.00px;height:0.60px;background:#6e6e6e;"></div>
<div class="t" style="top:276.55px;font-size:6.05px;left:38.00px;color:#1c1c1c;">Building Elevation</div>
<div class="a " style="left:46.60px;top:286.00px;width:6.00px;height:6.20px;background:#3f97dc;border:0.6px solid #8cc0ea;"></div>
<div class="t" style="top:285.72px;font-size:6.05px;left:57.00px;color:#1c1c1c;">Elevation: East</div>
<div class="a " style="left:46.60px;top:295.17px;width:6.00px;height:6.20px;background:#3f97dc;border:0.6px solid #8cc0ea;"></div>
<div class="t" style="top:294.89px;font-size:6.05px;left:57.00px;color:#1c1c1c;">Elevation: North</div>
<div class="a " style="left:46.60px;top:304.34px;width:6.00px;height:6.20px;background:#3f97dc;border:0.6px solid #8cc0ea;"></div>
<div class="t" style="top:304.06px;font-size:6.05px;left:57.00px;color:#1c1c1c;">Elevation: South</div>
<div class="a " style="left:46.60px;top:313.51px;width:6.00px;height:6.20px;background:#3f97dc;border:0.6px solid #8cc0ea;"></div>
<div class="t" style="top:313.23px;font-size:6.05px;left:57.00px;color:#1c1c1c;">Elevation: West</div>
<div class="a " style="left:14.20px;top:323.28px;width:5.60px;height:5.60px;background:#fff;border:0.6px solid #b4b4b4;"></div>
<div class="a " style="left:15.50px;top:325.78px;width:3.00px;height:0.60px;background:#6e6e6e;"></div>
<div class="a " style="left:16.70px;top:324.58px;width:0.60px;height:3.00px;background:#6e6e6e;"></div>
<div class="t" style="top:322.40px;font-size:6.05px;left:26.60px;color:#1c1c1c;">A-300-Reflected Ceiling Plan</div>
<div class="a " style="left:14.20px;top:332.45px;width:5.60px;height:5.60px;background:#fff;border:0.6px solid #b4b4b4;"></div>
<div class="a " style="left:15.50px;top:334.95px;width:3.00px;height:0.60px;background:#6e6e6e;"></div>
<div class="a " style="left:16.70px;top:333.75px;width:0.60px;height:3.00px;background:#6e6e6e;"></div>
<div class="t" style="top:331.57px;font-size:6.05px;left:26.60px;color:#1c1c1c;">A-400-Floor Finishing Plan</div>
<div class="a " style="left:14.20px;top:341.62px;width:5.60px;height:5.60px;background:#fff;border:0.6px solid #b4b4b4;"></div>
<div class="a " style="left:15.50px;top:344.12px;width:3.00px;height:0.60px;background:#6e6e6e;"></div>
<div class="a " style="left:16.70px;top:342.92px;width:0.60px;height:3.00px;background:#6e6e6e;"></div>
<div class="t" style="top:340.74px;font-size:6.05px;left:26.60px;color:#1c1c1c;">A-500-Furniture Layout Plan</div>
<div class="a " style="left:14.20px;top:350.79px;width:5.60px;height:5.60px;background:#fff;border:0.6px solid #b4b4b4;"></div>
<div class="a " style="left:15.50px;top:353.29px;width:3.00px;height:0.60px;background:#6e6e6e;"></div>
<div class="a " style="left:16.70px;top:352.09px;width:0.60px;height:3.00px;background:#6e6e6e;"></div>
<div class="t" style="top:349.91px;font-size:6.05px;left:26.60px;color:#1c1c1c;">A-600-Detail Layout Plan</div>
<div class="a " style="left:14.20px;top:359.96px;width:5.60px;height:5.60px;background:#fff;border:0.6px solid #b4b4b4;"></div>
<div class="a " style="left:15.50px;top:362.46px;width:3.00px;height:0.60px;background:#6e6e6e;"></div>
<div class="a " style="left:16.70px;top:361.26px;width:0.60px;height:3.00px;background:#6e6e6e;"></div>
<div class="t" style="top:359.08px;font-size:6.05px;left:26.60px;color:#1c1c1c;">S-100-Structural Drawings</div>
<div class="a " style="left:14.20px;top:368.73px;width:5.60px;height:5.80px;background:#e8e8e8;border:0.6px solid #777;"></div>
<div class="a " style="left:14.20px;top:368.73px;width:5.60px;height:1.60px;background:#8a8a8a;"></div>
<div class="t" style="top:368.25px;font-size:6.05px;left:24.20px;color:#1c1c1c;">Legends</div>
<div class="a " style="left:14.20px;top:377.90px;width:5.60px;height:5.80px;background:#f4f4f4;border:0.6px solid #888;"></div>
<div class="a " style="left:14.20px;top:380.30px;width:5.60px;height:0.50px;background:#999;"></div>
<div class="a " style="left:16.60px;top:377.90px;width:0.50px;height:5.80px;background:#999;"></div>
<div class="t" style="top:377.42px;font-size:6.05px;left:24.20px;color:#1c1c1c;">Schedules/Quantities (all)</div>
<div class="a " style="left:3.20px;top:387.47px;width:5.60px;height:5.60px;background:#fff;border:0.6px solid #b4b4b4;"></div>
<div class="a " style="left:4.50px;top:389.97px;width:3.00px;height:0.60px;background:#6e6e6e;"></div>
<div class="a " style="left:14.20px;top:387.07px;width:5.60px;height:5.80px;background:#f0f0f0;border:0.6px solid #888;"></div>
<div class="a " style="left:15.40px;top:388.47px;width:3.20px;height:3.00px;background:#bdbdbd;"></div>
<div class="t" style="top:386.59px;font-size:6.05px;left:24.20px;color:#1c1c1c;">Sheets (Sheets Category)</div>
<div class="a " style="left:14.20px;top:396.64px;width:5.60px;height:5.60px;background:#fff;border:0.6px solid #b4b4b4;"></div>
<div class="a " style="left:15.50px;top:399.14px;width:3.00px;height:0.60px;background:#6e6e6e;"></div>
<div class="t" style="top:395.76px;font-size:6.05px;left:26.60px;color:#1c1c1c;">A-000-General</div>
<div class="t" style="top:404.93px;font-size:6.05px;left:38.00px;color:#1c1c1c;">A-001 - General</div>
<svg style="left:12.5px;top:101.80px" width="8.5" height="8" viewBox="0 0 8.5 8"><circle cx="4.4" cy="4.2" r="2" fill="none" stroke="#555" stroke-width=".7"/><path d="M0.8 2.4V0.8H2.4M6.2 0.8H7.8V2.4" stroke="#666" stroke-width=".6" fill="none"/></svg>
<div class="t" style="top:93.42px;font-size:6.05px;left:690.00px;color:#222;">Properties</div>
<div class="a " style="left:689.70px;top:103.20px;width:33.60px;height:33.40px;background:#ffffff;"></div>
<div class="a " style="left:689.90px;top:114.20px;width:33.30px;height:10.40px;background:#9a9a9a;border-top:1px solid #444;border-bottom:0.8px solid #5a5a5a;"></div>
<div class="a " style="left:689.90px;top:117.60px;width:33.30px;height:0.60px;background:#b4b4b4;"></div>
<div class="t" style="top:112.89px;font-size:5.9px;left:725.80px;color:#222;">Floor</div>
<div class="t" style="top:121.49px;font-size:5.9px;left:725.80px;color:#222;">2-Exterior on Grade</div>
<svg style="left:794.6px;top:118.4px" width="4" height="2.6" viewBox="0 0 4 2.6"><path d="M0 0H4L2 2.6Z" fill="#222"/></svg>
<div class="a " style="left:688.30px;top:138.60px;width:71.80px;height:10.30px;background:#e2e2e2;border:0.6px solid #b4b4b4;"></div>
<div class="t" style="top:141.12px;font-size:6.05px;left:690.40px;color:#222;">Floors (1)</div>
<svg style="left:753.4px;top:142.6px" width="4.4" height="2.8" viewBox="0 0 4.4 2.8"><path d="M0.4 0.4L2.2 2.2L4 0.4" stroke="#555" stroke-width=".7" fill="none"/></svg>
<div class="a " style="left:761.00px;top:138.60px;width:39.00px;height:10.30px;background:#f7f7f7;"></div>
<div class="t" style="top:141.12px;font-size:6.05px;left:771.40px;color:#222;">Edit Type</div>
<svg style="left:763px;top:140.6px" width="6.4" height="6.4" viewBox="0 0 6.4 6.4"><rect x=".4" y=".4" width="5.6" height="5.6" fill="#f8f8f8" stroke="#555" stroke-width=".6"/><path d="M0.4 3.2H6M3.2 0.4V6" stroke="#555" stroke-width=".6"/></svg>
<div class="a " style="left:688.30px;top:149.50px;width:102.30px;height:253.00px;background:#ffffff;"></div>
<div class="a " style="left:790.60px;top:149.50px;width:9.40px;height:253.00px;background:#f0f0f0;"></div>
<svg style="left:793.00px;top:153px" width="5" height="3.2" viewBox="0 0 5 3.2"><path d="M0.5 2.7L2.5 0.6L4.5 2.7" stroke="#444" stroke-width=".8" fill="none"/></svg>
<svg style="left:793.00px;top:395.6px" width="5" height="3.2" viewBox="0 0 5 3.2"><path d="M0.5 0.5L2.5 2.6L4.5 0.5" stroke="#444" stroke-width=".8" fill="none"/></svg>
<div class="a " style="left:688.30px;top:149.50px;width:102.30px;height:10.00px;background:#dcdcdc;border-bottom:0.5px solid #c8c8c8;"></div>
<div class="t" style="top:151.82px;font-size:6.05px;left:689.70px;color:#1c1c1c;">Constraints</div>
<div class="t" style="top:151.88px;font-size:4.6px;left:787.80px;transform:translateX(-50%);color:#222;transform:translateX(-50%) rotate(90deg);font-weight:bold;">«</div>
<div class="a " style="left:688.30px;top:159.50px;width:102.30px;height:10.00px;border-bottom:0.5px solid #d6d6d6;"></div>
<div class="a " style="left:736.30px;top:159.50px;width:0.60px;height:10.00px;background:#d0d0d0;"></div>
<div class="a " style="left:784.90px;top:159.50px;width:0.60px;height:10.00px;background:#d0d0d0;"></div>
<div class="t" style="top:161.32px;font-size:6.05px;left:692.50px;color:#1e1e1e;">Level</div>
<div class="a " style="left:736.80px;top:159.80px;width:48.00px;height:9.20px;background:#fff;border:0.8px solid #3c3c3c;"></div>
<div class="t" style="top:161.42px;font-size:6.05px;left:738.00px;color:#1e1e1e;">0-Grade Level</div>
<div class="a " style="left:688.30px;top:169.50px;width:102.30px;height:10.00px;border-bottom:0.5px solid #d6d6d6;"></div>
<div class="a " style="left:736.30px;top:169.50px;width:0.60px;height:10.00px;background:#d0d0d0;"></div>
<div class="a " style="left:784.90px;top:169.50px;width:0.60px;height:10.00px;background:#d0d0d0;"></div>
<div class="t" style="top:171.32px;font-size:6.05px;left:692.50px;color:#1e1e1e;">Height Offset ...</div>
<div class="t" style="top:171.32px;font-size:6.05px;left:738.00px;color:#1e1e1e;">0.0</div>
<div class="a " style="left:688.30px;top:179.50px;width:102.30px;height:10.00px;border-bottom:0.5px solid #d6d6d6;"></div>
<div class="a " style="left:736.30px;top:179.50px;width:0.60px;height:10.00px;background:#d0d0d0;"></div>
<div class="a " style="left:784.90px;top:179.50px;width:0.60px;height:10.00px;background:#d0d0d0;"></div>
<div class="t" style="top:181.32px;font-size:6.05px;left:692.50px;color:#1e1e1e;">Room Boundi...</div>
<div class="a " style="left:738.20px;top:181.20px;width:6.60px;height:6.60px;background:#fff;border:0.7px solid #3a3a3a;"></div>
<svg style="left:739.50px;top:182.70px" width="4" height="3.6" viewBox="0 0 4 3.6"><path d="M0.4 1.8L1.5 3L3.6 0.5" stroke="#222" stroke-width=".7" fill="none"/></svg>
<div class="a " style="left:688.30px;top:189.50px;width:102.30px;height:10.00px;border-bottom:0.5px solid #d6d6d6;"></div>
<div class="a " style="left:736.30px;top:189.50px;width:0.60px;height:10.00px;background:#d0d0d0;"></div>
<div class="a " style="left:784.90px;top:189.50px;width:0.60px;height:10.00px;background:#d0d0d0;"></div>
<div class="t" style="top:191.32px;font-size:6.05px;left:692.50px;color:#909090;">Related to Mass</div>
<div class="a " style="left:738.20px;top:191.20px;width:6.60px;height:6.60px;background:#f8f8f8;border:0.7px solid #cdcdcd;"></div>
<div class="a " style="left:688.30px;top:199.50px;width:102.30px;height:10.00px;background:#dcdcdc;border-bottom:0.5px solid #c8c8c8;"></div>
<div class="t" style="top:201.82px;font-size:6.05px;left:689.70px;color:#1c1c1c;">Structural</div>
<div class="t" style="top:201.88px;font-size:4.6px;left:787.80px;transform:translateX(-50%);color:#222;transform:translateX(-50%) rotate(90deg);font-weight:bold;">«</div>
<div class="a " style="left:688.30px;top:209.50px;width:102.30px;height:10.00px;border-bottom:0.5px solid #d6d6d6;"></div>
<div class="a " style="left:736.30px;top:209.50px;width:0.60px;height:10.00px;background:#d0d0d0;"></div>
<div class="a " style="left:784.90px;top:209.50px;width:0.60px;height:10.00px;background:#d0d0d0;"></div>
<div class="t" style="top:211.32px;font-size:6.05px;left:692.50px;color:#1e1e1e;">Structural</div>
<div class="a " style="left:738.20px;top:211.20px;width:6.60px;height:6.60px;background:#fff;border:0.7px solid #3a3a3a;"></div>
<div class="a " style="left:688.30px;top:219.50px;width:102.30px;height:10.00px;background:#dcdcdc;border-bottom:0.5px solid #c8c8c8;"></div>
<div class="t" style="top:221.82px;font-size:6.05px;left:689.70px;color:#1c1c1c;">Dimensions</div>
<div class="t" style="top:221.88px;font-size:4.6px;left:787.80px;transform:translateX(-50%);color:#222;transform:translateX(-50%) rotate(90deg);font-weight:bold;">«</div>
<div class="a " style="left:688.30px;top:229.50px;width:102.30px;height:10.00px;border-bottom:0.5px solid #d6d6d6;"></div>
<div class="a " style="left:736.30px;top:229.50px;width:0.60px;height:10.00px;background:#d0d0d0;"></div>
<div class="a " style="left:784.90px;top:229.50px;width:0.60px;height:10.00px;background:#d0d0d0;"></div>
<div class="t" style="top:231.32px;font-size:6.05px;left:692.50px;color:#909090;">Slope</div>
<div class="a " style="left:688.30px;top:239.50px;width:102.30px;height:10.00px;border-bottom:0.5px solid #d6d6d6;"></div>
<div class="a " style="left:736.30px;top:239.50px;width:0.60px;height:10.00px;background:#d0d0d0;"></div>
<div class="a " style="left:784.90px;top:239.50px;width:0.60px;height:10.00px;background:#d0d0d0;"></div>
<div class="t" style="top:241.32px;font-size:6.05px;left:692.50px;color:#909090;">Perimeter</div>
<div class="t" style="top:241.32px;font-size:6.05px;left:738.00px;color:#909090;">176760.0</div>
<div class="a " style="left:688.30px;top:249.50px;width:102.30px;height:10.00px;border-bottom:0.5px solid #d6d6d6;"></div>
<div class="a " style="left:736.30px;top:249.50px;width:0.60px;height:10.00px;background:#d0d0d0;"></div>
<div class="a " style="left:784.90px;top:249.50px;width:0.60px;height:10.00px;background:#d0d0d0;"></div>
<div class="t" style="top:251.32px;font-size:6.05px;left:692.50px;color:#909090;">Area</div>
<div class="t" style="top:251.32px;font-size:6.05px;left:738.00px;color:#909090;">243.032 m²</div>
<div class="a " style="left:688.30px;top:259.50px;width:102.30px;height:10.00px;border-bottom:0.5px solid #d6d6d6;"></div>
<div class="a " style="left:736.30px;top:259.50px;width:0.60px;height:10.00px;background:#d0d0d0;"></div>
<div class="a " style="left:784.90px;top:259.50px;width:0.60px;height:10.00px;background:#d0d0d0;"></div>
<div class="t" style="top:261.32px;font-size:6.05px;left:692.50px;color:#909090;">Volume</div>
<div class="t" style="top:261.32px;font-size:6.05px;left:738.00px;color:#909090;">2234.48 CF</div>
<div class="a " style="left:688.30px;top:269.50px;width:102.30px;height:10.00px;border-bottom:0.5px solid #d6d6d6;"></div>
<div class="a " style="left:736.30px;top:269.50px;width:0.60px;height:10.00px;background:#d0d0d0;"></div>
<div class="a " style="left:784.90px;top:269.50px;width:0.60px;height:10.00px;background:#d0d0d0;"></div>
<div class="t" style="top:271.32px;font-size:6.05px;left:692.50px;color:#909090;">Elevation at T...</div>
<div class="t" style="top:271.32px;font-size:6.05px;left:738.00px;color:#909090;">0.0</div>
<div class="a " style="left:688.30px;top:279.50px;width:102.30px;height:10.00px;border-bottom:0.5px solid #d6d6d6;"></div>
<div class="a " style="left:736.30px;top:279.50px;width:0.60px;height:10.00px;background:#d0d0d0;"></div>
<div class="a " style="left:784.90px;top:279.50px;width:0.60px;height:10.00px;background:#d0d0d0;"></div>
<div class="t" style="top:281.32px;font-size:6.05px;left:692.50px;color:#909090;">Elevation at B...</div>
<div class="t" style="top:281.32px;font-size:6.05px;left:738.00px;color:#909090;">-260.4</div>
<div class="a " style="left:688.30px;top:289.50px;width:102.30px;height:10.00px;border-bottom:0.5px solid #d6d6d6;"></div>
<div class="a " style="left:736.30px;top:289.50px;width:0.60px;height:10.00px;background:#d0d0d0;"></div>
<div class="a " style="left:784.90px;top:289.50px;width:0.60px;height:10.00px;background:#d0d0d0;"></div>
<div class="t" style="top:291.32px;font-size:6.05px;left:692.50px;color:#909090;">Thickness</div>
<div class="t" style="top:291.32px;font-size:6.05px;left:738.00px;color:#909090;">260.4</div>
<div class="a " style="left:688.30px;top:299.50px;width:102.30px;height:10.00px;background:#dcdcdc;border-bottom:0.5px solid #c8c8c8;"></div>
<div class="t" style="top:301.82px;font-size:6.05px;left:689.70px;color:#1c1c1c;">Identity Data</div>
<div class="t" style="top:301.88px;font-size:4.6px;left:787.80px;transform:translateX(-50%);color:#222;transform:translateX(-50%) rotate(90deg);font-weight:bold;">«</div>
<div class="a " style="left:688.30px;top:309.50px;width:102.30px;height:10.00px;border-bottom:0.5px solid #d6d6d6;"></div>
<div class="a " style="left:736.30px;top:309.50px;width:0.60px;height:10.00px;background:#d0d0d0;"></div>
<div class="a " style="left:784.90px;top:309.50px;width:0.60px;height:10.00px;background:#d0d0d0;"></div>
<div class="t" style="top:311.32px;font-size:6.05px;left:692.50px;color:#1e1e1e;">Image</div>
<div class="a " style="left:688.30px;top:319.50px;width:102.30px;height:10.00px;border-bottom:0.5px solid #d6d6d6;"></div>
<div class="a " style="left:736.30px;top:319.50px;width:0.60px;height:10.00px;background:#d0d0d0;"></div>
<div class="a " style="left:784.90px;top:319.50px;width:0.60px;height:10.00px;background:#d0d0d0;"></div>
<div class="t" style="top:321.32px;font-size:6.05px;left:692.50px;color:#1e1e1e;">Comments</div>
<div class="a " style="left:785.60px;top:320.00px;width:4.60px;height:8.80px;background:#d6d6d6;border:0.5px solid #a8a8a8;"></div>
<div class="a " style="left:688.30px;top:329.50px;width:102.30px;height:10.00px;border-bottom:0.5px solid #d6d6d6;"></div>
<div class="a " style="left:736.30px;top:329.50px;width:0.60px;height:10.00px;background:#d0d0d0;"></div>
<div class="a " style="left:784.90px;top:329.50px;width:0.60px;height:10.00px;background:#d0d0d0;"></div>
<div class="t" style="top:331.32px;font-size:6.05px;left:692.50px;color:#1e1e1e;">Mark</div>
<div class="a " style="left:688.30px;top:339.50px;width:102.30px;height:10.00px;border-bottom:0.5px solid #d6d6d6;"></div>
<div class="a " style="left:736.30px;top:339.50px;width:0.60px;height:10.00px;background:#d0d0d0;"></div>
<div class="a " style="left:784.90px;top:339.50px;width:0.60px;height:10.00px;background:#d0d0d0;"></div>
<div class="t" style="top:341.32px;font-size:6.05px;left:692.50px;color:#909090;">Has Association</div>
<div class="a " style="left:738.20px;top:341.20px;width:6.60px;height:6.60px;background:#f8f8f8;border:0.7px solid #cdcdcd;"></div>
<div class="a " style="left:688.30px;top:349.50px;width:102.30px;height:10.00px;background:#dcdcdc;border-bottom:0.5px solid #c8c8c8;"></div>
<div class="t" style="top:351.82px;font-size:6.05px;left:689.70px;color:#1c1c1c;">Phasing</div>
<div class="t" style="top:351.88px;font-size:4.6px;left:787.80px;transform:translateX(-50%);color:#222;transform:translateX(-50%) rotate(90deg);font-weight:bold;">«</div>
<div class="a " style="left:688.30px;top:359.50px;width:102.30px;height:10.00px;border-bottom:0.5px solid #d6d6d6;"></div>
<div class="a " style="left:736.30px;top:359.50px;width:0.60px;height:10.00px;background:#d0d0d0;"></div>
<div class="a " style="left:784.90px;top:359.50px;width:0.60px;height:10.00px;background:#d0d0d0;"></div>
<div class="t" style="top:361.32px;font-size:6.05px;left:692.50px;color:#1e1e1e;">Phase Created</div>
<div class="t" style="top:361.32px;font-size:6.05px;left:738.00px;color:#1e1e1e;">New Constructi...</div>
<div class="a " style="left:688.30px;top:369.50px;width:102.30px;height:10.00px;border-bottom:0.5px solid #d6d6d6;"></div>
<div class="a " style="left:736.30px;top:369.50px;width:0.60px;height:10.00px;background:#d0d0d0;"></div>
<div class="a " style="left:784.90px;top:369.50px;width:0.60px;height:10.00px;background:#d0d0d0;"></div>
<div class="t" style="top:371.32px;font-size:6.05px;left:692.50px;color:#1e1e1e;">Phase Demoli...</div>
<div class="t" style="top:371.32px;font-size:6.05px;left:738.00px;color:#1e1e1e;">None</div>
<div class="a " style="left:688.30px;top:379.50px;width:102.30px;height:10.00px;background:#dcdcdc;border-bottom:0.5px solid #c8c8c8;"></div>
<div class="t" style="top:381.82px;font-size:6.05px;left:689.70px;color:#1c1c1c;">IFC Parameters</div>
<div class="t" style="top:381.88px;font-size:4.6px;left:787.80px;transform:translateX(-50%);color:#222;transform:translateX(-50%) rotate(90deg);font-weight:bold;">«</div>
<div class="a " style="left:688.30px;top:389.50px;width:102.30px;height:10.00px;border-bottom:0.5px solid #d6d6d6;"></div>
<div class="a " style="left:736.30px;top:389.50px;width:0.60px;height:10.00px;background:#d0d0d0;"></div>
<div class="a " style="left:784.90px;top:389.50px;width:0.60px;height:10.00px;background:#d0d0d0;"></div>
<div class="t" style="top:391.32px;font-size:6.05px;left:692.50px;color:#1e1e1e;">Export to IFC</div>
<div class="t" style="top:391.32px;font-size:6.05px;left:738.00px;color:#1e1e1e;">By Type</div>
<div class="a " style="left:688.30px;top:399.50px;width:102.30px;height:3.00px;border-bottom:0.5px solid #d6d6d6;"></div>
<div class="a " style="left:736.30px;top:399.50px;width:0.60px;height:3.00px;background:#d0d0d0;"></div>
<div class="a " style="left:784.90px;top:399.50px;width:0.60px;height:3.00px;background:#d0d0d0;"></div>
<div class="t" style="top:404.82px;font-size:6.05px;left:689.00px;color:#1561c0;text-decoration:underline;">Properties help</div>
<div class="a " style="left:764.40px;top:402.60px;width:35.60px;height:12.00px;background:#cccccc;border:0.6px solid #bfbfbf;"></div>
<div class="t" style="top:405.92px;font-size:6.05px;left:782.20px;transform:translateX(-50%);color:#a3a3a3;">Apply</div>
<div class="t" style="top:408.72px;font-size:5.4px;left:178.20px;transform:translateX(-50%);color:#222;font-weight:bold;">1 : 96</div>
<div class="a " style="left:676.00px;top:405.50px;width:11.50px;height:10.50px;background:#e6e6e6;"></div>
<div class="t" style="top:419.39px;font-size:6.1px;left:3.00px;color:#222;">Ready</div>
<div class="a " style="left:301.00px;top:416.60px;width:104.60px;height:9.60px;background:#ffffff;border:0.5px solid #c4c4c4;"></div>
<div class="t" style="top:420.10px;font-size:5px;left:425.00px;color:#777;">:0</div>
<div class="a " style="left:456.50px;top:416.60px;width:108.40px;height:9.60px;background:#ffffff;border:0.5px solid #c4c4c4;"></div>
<div class="t" style="top:418.59px;font-size:6.1px;left:459.00px;color:#ababab;">Main Model</div>
<div class="t" style="top:419.02px;font-size:5.6px;left:764.00px;color:#222;">:1</div>
<svg style="left:0;top:0" width="800" height="427" viewBox="0 0 800 427"><rect x="198.20" y="407.40" width="6.40" height="5.40" fill="#dfe3ea" stroke="#55606e" stroke-width="0.7"/><path d="M198.2 409.2H204.6M200.4 407.4V412.8M202.6 407.4V412.8" stroke="#7a8696" stroke-width="0.5" fill="none" stroke-linecap="round" stroke-linejoin="round"/><path d="M208.6 409L211.4 407.6L214.4 409V411.8L211.4 413.2L208.6 411.8Z" stroke="#2f6fbe" stroke-width="0.7" fill="#9ec4ee" stroke-linecap="round" stroke-linejoin="round"/><path d="M208.6 409L211.4 410.4L214.4 409" stroke="#2f6fbe" stroke-width="0.6" fill="none" stroke-linecap="round" stroke-linejoin="round"/><circle cx="220.8" cy="409.8" r="2.2" fill="#f6d36a" stroke="#c98a1a" stroke-width=".6"/><path d="M222.6 411.4L224 413" stroke="#c0392b" stroke-width="0.9" fill="none" stroke-linecap="round" stroke-linejoin="round"/><rect x="228.60" y="407.60" width="4.60" height="4.60" fill="#e9eef6" stroke="#4a67a0" stroke-width="0.7"/><path d="M231.4 410.4L234.4 413.2" stroke="#c0392b" stroke-width="1" fill="none" stroke-linecap="round" stroke-linejoin="round"/><path d="M238.6 408.4H243.6V411.4H238.6Z" stroke="#4a7fc4" stroke-width="0.7" fill="#dbe8f8" stroke-linecap="round" stroke-linejoin="round"/><path d="M241 411.4L244.6 413M243.8 409.4C245.6 409.4 245.6 412 244 412" stroke="#4a7fc4" stroke-width="0.6" fill="none" stroke-linecap="round" stroke-linejoin="round"/><path d="M248.4 411.6L251.4 407.8L254.4 411.6Z" stroke="#3a68b0" stroke-width="0.7" fill="#7fa6dc" stroke-linecap="round" stroke-linejoin="round"/><path d="M249.4 412.6H253.6" stroke="#c0392b" stroke-width="0.9" fill="none" stroke-linecap="round" stroke-linejoin="round"/><path d="M258.4 411.8V409L261.4 407.4L264.4 409V411.8Z" stroke="#3a68b0" stroke-width="0.7" fill="#8db2e4" stroke-linecap="round" stroke-linejoin="round"/><path d="M259.8 411.8V410H263V411.8" stroke="#23487f" stroke-width="0.6" fill="none" stroke-linecap="round" stroke-linejoin="round"/><rect x="268.40" y="407.60" width="5.60" height="4.20" fill="#e9eef6" stroke="#4a67a0" stroke-width="0.7"/><path d="M270 412.8H274.6M272.4 409V412.8" stroke="#4a67a0" stroke-width="0.6" fill="none" stroke-linecap="round" stroke-linejoin="round"/><path d="M278.4 410C279.6 407.4 283.2 407.4 284.4 410C283.2 412.4 279.6 412.4 278.4 410Z" stroke="#555" stroke-width="0.7" fill="#f4f4f4" stroke-linecap="round" stroke-linejoin="round"/><circle cx="281.4" cy="410" r="1" fill="#555"/><path d="M291.6 407.6C290 407.6 289.6 409.6 290.8 410.6V411.8H292.4V410.6C293.6 409.6 293.2 407.6 291.6 407.6Z" stroke="#3a68b0" stroke-width="0.6" fill="#dbe8f8" stroke-linecap="round" stroke-linejoin="round"/><rect x="300.60" y="408.00" width="5.40" height="3.80" fill="#f4f4f4" stroke="#444" stroke-width="0.7"/><path d="M302 412.8H306.4" stroke="#444" stroke-width="0.7" fill="none" stroke-linecap="round" stroke-linejoin="round"/><path d="M310.6 411.8V409L313.8 407.6L317 409V411.8Z" stroke="#444" stroke-width="0.7" fill="#c9c9c9" stroke-linecap="round" stroke-linejoin="round"/><path d="M312 411.8V409.8H315.6V411.8" stroke="#333" stroke-width="0.6" fill="none" stroke-linecap="round" stroke-linejoin="round"/><rect x="320.80" y="408.40" width="4.40" height="4.00" fill="#e6e6e6" stroke="#444" stroke-width="0.7"/><rect x="322.40" y="407.40" width="4.40" height="4.00" fill="#f4f4f4" stroke="#444" stroke-width="0.7"/><rect x="329.80" y="407.80" width="6.00" height="4.40" fill="#f4f4f4" stroke="#444" stroke-width="0.7"/><path d="M329.8 410H335.8M332.8 407.8V412.2" stroke="#444" stroke-width="0.5" fill="none" stroke-linecap="round" stroke-linejoin="round"/><path d="M345.6 408.4L343.6 410.4L345.6 412.4" stroke="#333" stroke-width="0.8" fill="none" stroke-linecap="round" stroke-linejoin="round"/><rect x="504.00" y="407.40" width="9.40" height="6.20" fill="#cdcdcd"/><path d="M671.6 408.4L673.6 410.4L671.6 412.4" stroke="#333" stroke-width="0.8" fill="none" stroke-linecap="round" stroke-linejoin="round"/><path d="M288.4 424.6V421L290.4 419H292.4V424.6M287.6 424.6H293.4M289.6 421.6H291.2" stroke="#8a8a8a" stroke-width="0.7" fill="none" stroke-linecap="round" stroke-linejoin="round"/><path d="M399.4 420.6L401 422.2L402.6 420.6" stroke="#c6c6c6" stroke-width="0.7" fill="none" stroke-linecap="round" stroke-linejoin="round"/><path d="M411.6 424V421L413 419.6L414.4 421V424Z" stroke="#a8a8a8" stroke-width="0.7" fill="#c4c4c4" stroke-linecap="round" stroke-linejoin="round"/><path d="M420.4 422.6A1.6 1.6 0 1 1 423.6 422.6Z" stroke="#8c8c8c" stroke-width="0.7" fill="#bdbdbd" stroke-linecap="round" stroke-linejoin="round"/><rect x="434.00" y="418.40" width="6.00" height="6.20" fill="#bcbcbc"/><rect x="447.00" y="418.00" width="6.20" height="6.20" fill="#b4b4b4" stroke="#9c9c9c" stroke-width="0.6"/><rect x="448.60" y="419.40" width="3.00" height="2.60" fill="#d8d8d8"/><path d="M558.4 420.6L560 422.2L561.6 420.6" stroke="#c6c6c6" stroke-width="0.7" fill="none" stroke-linecap="round" stroke-linejoin="round"/><path d="M683 424.4V420.4H686.4V424.4M681.6 419.2H687.8M687.6 422H689.4V424.4" stroke="#7a7a7a" stroke-width="0.8" fill="none" stroke-linecap="round" stroke-linejoin="round"/><path d="M695.6 424.4V420.4H699.0V424.4M694.2 419.2H700.4M700.2 422H702.0V424.4" stroke="#7a7a7a" stroke-width="0.8" fill="none" stroke-linecap="round" stroke-linejoin="round"/><path d="M708.4 424.4V420.4H711.8V424.4M707.0 419.2H713.1999999999999M713.0 422H714.8V424.4" stroke="#7a7a7a" stroke-width="0.8" fill="none" stroke-linecap="round" stroke-linejoin="round"/><path d="M720.6 424.4V420.4H724.0V424.4M719.2 419.2H725.4M725.2 422H727.0V424.4" stroke="#7a7a7a" stroke-width="0.8" fill="none" stroke-linecap="round" stroke-linejoin="round"/><path d="M735 419.2L736.6 421.2L735 423.2M737 421.2H734" stroke="#b4b4b4" stroke-width="0.7" fill="none" stroke-linecap="round" stroke-linejoin="round"/><circle cx="748.2" cy="421.2" r="2.2" fill="none" stroke="#7a7a7a" stroke-width=".9"/><path d="M755.4 418.4H763.2L760.4 421.6V424.6L758.2 423.6V421.6Z" stroke="#333" stroke-width="0.8" fill="#e8e8e8" stroke-linecap="round" stroke-linejoin="round"/></svg>
<div class="a " style="left:290.80px;top:53.80px;width:211.20px;height:312.80px;background:#f0f0f0;box-shadow:0 0 0 0.6px rgba(60,60,60,.55),0 2px 7px 1px rgba(0,0,0,.38);border:0.6px solid #fafafa;"></div>
<div class="a " style="left:291.40px;top:54.40px;width:210.00px;height:15.10px;background:#ffffff;"></div>
<div class="t" style="top:59.52px;font-size:6.25px;left:295.00px;color:#111;letter-spacing:-0.12px;">Type Properties</div>
<svg style="left:489.6px;top:58.6px" width="6" height="6" viewBox="0 0 6 6"><path d="M0.6 0.6L5.4 5.4M5.4 0.6L0.6 5.4" stroke="#222" stroke-width=".8" fill="none"/></svg>
<div class="t" style="top:78.14px;font-size:5.35px;left:301.50px;">Family:</div>
<div class="t" style="top:94.64px;font-size:5.35px;left:301.50px;">Type:</div>
<div class="a " style="left:335.30px;top:75.50px;width:103.20px;height:10.60px;background:#e2e2e2;border:0.6px solid #b4b4b4;"></div>
<div class="t" style="top:78.74px;font-size:5.35px;left:337.10px;">System Family: Floor</div>
<svg style="left:431.90px;top:79.50px" width="4.4" height="2.8" viewBox="0 0 4.4 2.8"><path d="M0.4 0.4L2.2 2.2L4 0.4" stroke="#555" stroke-width=".7" fill="none"/></svg>
<div class="a " style="left:335.30px;top:92.00px;width:103.20px;height:10.40px;background:#e2e2e2;border:0.6px solid #b4b4b4;"></div>
<div class="t" style="top:95.14px;font-size:5.35px;left:337.10px;">2-Exterior on Grade</div>
<svg style="left:431.90px;top:95.90px" width="4.4" height="2.8" viewBox="0 0 4.4 2.8"><path d="M0.4 0.4L2.2 2.2L4 0.4" stroke="#555" stroke-width=".7" fill="none"/></svg>
<div class="a " style="left:444.50px;top:75.50px;width:51.70px;height:12.00px;background:#cccccc;border:0.6px solid #bfbfbf;"></div>
<div class="t" style="top:79.54px;font-size:5.35px;left:470.35px;transform:translateX(-50%);color:#a3a3a3;">Load...</div>
<div class="a " style="left:444.50px;top:91.20px;width:51.70px;height:12.60px;background:#e1e1e1;border:0.6px solid #bebebe;"></div>
<div class="t" style="top:95.54px;font-size:5.35px;left:470.35px;transform:translateX(-50%);color:#111;">Duplicate...</div>
<div class="a " style="left:444.50px;top:107.00px;width:51.70px;height:12.60px;background:#e1e1e1;border:0.6px solid #bebebe;"></div>
<div class="t" style="top:111.34px;font-size:5.35px;left:470.35px;transform:translateX(-50%);color:#111;">Rename...</div>
<div class="t" style="top:124.04px;font-size:5.35px;left:301.50px;">Type Parameters</div>
<div class="a " style="left:301.50px;top:133.40px;width:184.30px;height:192.60px;background:#ffffff;border:0.6px solid #b4b4b4;"></div>
<div class="a " style="left:301.50px;top:133.60px;width:84.00px;height:12.40px;background:#f4f4f4;border:0.9px solid #6e6e6e;"></div>
<div class="a " style="left:385.00px;top:133.60px;width:95.10px;height:12.40px;background:#f4f4f4;border:0.9px solid #6e6e6e;"></div>
<div class="a " style="left:479.10px;top:133.60px;width:7.20px;height:12.40px;background:#f4f4f4;border:0.9px solid #6e6e6e;"></div>
<div class="t" style="top:136.85px;font-size:6.2px;left:343.50px;transform:translateX(-50%);color:#222;">Parameter</div>
<div class="t" style="top:136.85px;font-size:6.2px;left:432.55px;transform:translateX(-50%);color:#222;">Value</div>
<div class="t" style="top:138.13px;font-size:4.5px;left:482.70px;transform:translateX(-50%);color:#333;">=</div>
<div class="a " style="left:485.80px;top:133.00px;width:9.70px;height:193.50px;background:#f0f0f0;"></div>
<div class="a " style="left:486.60px;top:147.00px;width:8.10px;height:74.00px;background:#cdcdcd;"></div>
<svg style="left:488.20px;top:137.6px" width="5" height="3.2" viewBox="0 0 5 3.2"><path d="M0.5 2.7L2.5 0.6L4.5 2.7" stroke="#444" stroke-width=".8" fill="none"/></svg>
<svg style="left:488.20px;top:318.4px" width="5" height="3.2" viewBox="0 0 5 3.2"><path d="M0.5 0.5L2.5 2.6L4.5 0.5" stroke="#444" stroke-width=".8" fill="none"/></svg>
<div class="a " style="left:302.10px;top:146.80px;width:183.10px;height:10.10px;background:#97b3d8;border-bottom:0.5px solid #86a3c8;"></div>
<div class="t" style="top:149.86px;font-size:5.95px;left:302.90px;color:#0c0c14;font-weight:bold;">Construction</div>
<div class="t" style="top:149.28px;font-size:4.6px;left:482.60px;transform:translateX(-50%);color:#1a2a44;transform:translateX(-50%) rotate(90deg);font-weight:bold;">«</div>
<div class="a " style="left:302.10px;top:156.90px;width:183.10px;height:10.10px;border-bottom:0.5px solid #d2d2d2;"></div>
<div class="a " style="left:385.20px;top:156.90px;width:0.60px;height:10.10px;background:#cfcfcf;"></div>
<div class="a " style="left:479.30px;top:156.90px;width:0.60px;height:10.10px;background:#cfcfcf;"></div>
<div class="t" style="top:159.32px;font-size:6.05px;left:302.90px;color:#1e1e1e;">Structure</div>
<div class="a " style="left:385.90px;top:157.20px;width:93.20px;height:9.30px;background:#e1e1e1;border:0.5px solid #bdbdbd;"></div>
<div class="t" style="top:159.32px;font-size:6.05px;left:432.15px;transform:translateX(-50%);color:#111;">Edit...</div>
<div class="a " style="left:302.10px;top:167.00px;width:183.10px;height:9.90px;border-bottom:0.5px solid #d2d2d2;"></div>
<div class="a " style="left:385.20px;top:167.00px;width:0.60px;height:9.90px;background:#cfcfcf;"></div>
<div class="a " style="left:479.30px;top:167.00px;width:0.60px;height:9.90px;background:#cfcfcf;"></div>
<div class="t" style="top:169.32px;font-size:6.05px;left:302.90px;color:#a2a2a2;">Default Thickness</div>
<div class="t" style="top:169.34px;font-size:6.0px;left:386.90px;color:#a2a2a2;">260.4</div>
<div class="a " style="left:302.10px;top:176.90px;width:183.10px;height:10.30px;border-bottom:0.5px solid #d2d2d2;"></div>
<div class="a " style="left:385.20px;top:176.90px;width:0.60px;height:10.30px;background:#cfcfcf;"></div>
<div class="a " style="left:479.30px;top:176.90px;width:0.60px;height:10.30px;background:#cfcfcf;"></div>
<div class="t" style="top:179.42px;font-size:6.05px;left:302.90px;color:#1e1e1e;">Function</div>
<div class="a " style="left:302.10px;top:189.00px;width:183.10px;height:9.60px;background:#97b3d8;border-bottom:0.5px solid #86a3c8;"></div>
<div class="t" style="top:191.81px;font-size:5.95px;left:302.90px;color:#0c0c14;font-weight:bold;">Graphics</div>
<div class="t" style="top:191.23px;font-size:4.6px;left:482.60px;transform:translateX(-50%);color:#1a2a44;transform:translateX(-50%) rotate(90deg);font-weight:bold;">«</div>
<div class="a " style="left:302.10px;top:198.60px;width:183.10px;height:10.00px;border-bottom:0.5px solid #d2d2d2;"></div>
<div class="a " style="left:385.20px;top:198.60px;width:0.60px;height:10.00px;background:#cfcfcf;"></div>
<div class="a " style="left:479.30px;top:198.60px;width:0.60px;height:10.00px;background:#cfcfcf;"></div>
<div class="t" style="top:200.97px;font-size:6.05px;left:302.90px;color:#1e1e1e;">Coarse Scale Fill Pattern</div>
<div class="a " style="left:302.10px;top:208.60px;width:183.10px;height:10.30px;border-bottom:0.5px solid #d2d2d2;"></div>
<div class="a " style="left:385.20px;top:208.60px;width:0.60px;height:10.30px;background:#cfcfcf;"></div>
<div class="a " style="left:479.30px;top:208.60px;width:0.60px;height:10.30px;background:#cfcfcf;"></div>
<div class="t" style="top:211.12px;font-size:6.05px;left:302.90px;color:#1e1e1e;">Coarse Scale Fill Color</div>
<div class="a " style="left:385.90px;top:208.90px;width:93.20px;height:9.50px;background:#ececec;border:0.5px solid #c4c4c4;"></div>
<div class="a " style="left:387.10px;top:210.80px;width:5.60px;height:5.80px;background:#000;"></div>
<div class="t" style="top:211.12px;font-size:6.05px;left:394.70px;color:#111;">Black</div>
<div class="a " style="left:302.10px;top:221.20px;width:183.10px;height:10.00px;background:#97b3d8;border-bottom:0.5px solid #86a3c8;"></div>
<div class="t" style="top:224.21px;font-size:5.95px;left:302.90px;color:#0c0c14;font-weight:bold;">Materials and Finishes</div>
<div class="t" style="top:223.63px;font-size:4.6px;left:482.60px;transform:translateX(-50%);color:#1a2a44;transform:translateX(-50%) rotate(90deg);font-weight:bold;">«</div>
<div class="a " style="left:302.10px;top:231.20px;width:183.10px;height:10.30px;border-bottom:0.5px solid #d2d2d2;"></div>
<div class="a " style="left:385.20px;top:231.20px;width:0.60px;height:10.30px;background:#cfcfcf;"></div>
<div class="a " style="left:479.30px;top:231.20px;width:0.60px;height:10.30px;background:#cfcfcf;"></div>
<div class="t" style="top:233.72px;font-size:6.05px;left:302.90px;color:#a2a2a2;">Structural Material</div>
<div class="t" style="top:233.74px;font-size:6.0px;left:386.90px;color:#a2a2a2;">1-Compact Earth</div>
<div class="a " style="left:302.10px;top:242.50px;width:183.10px;height:10.30px;background:#97b3d8;border-bottom:0.5px solid #86a3c8;"></div>
<div class="t" style="top:245.66px;font-size:5.95px;left:302.90px;color:#0c0c14;font-weight:bold;">Analytical Properties</div>
<div class="t" style="top:245.08px;font-size:4.6px;left:482.60px;transform:translateX(-50%);color:#1a2a44;transform:translateX(-50%) rotate(90deg);font-weight:bold;">«</div>
<div class="a " style="left:302.10px;top:253.30px;width:183.10px;height:9.70px;border-bottom:0.5px solid #d2d2d2;"></div>
<div class="a " style="left:385.20px;top:253.30px;width:0.60px;height:9.70px;background:#cfcfcf;"></div>
<div class="a " style="left:479.30px;top:253.30px;width:0.60px;height:9.70px;background:#cfcfcf;"></div>
<div class="t" style="top:255.52px;font-size:6.05px;left:302.90px;color:#a2a2a2;">Heat Transfer Coefficient (U)</div>
<div class="t" style="top:255.54px;font-size:6.0px;left:386.90px;color:#a2a2a2;">0.4773 BTU/(h·ft²·°F)</div>
<div class="a " style="left:302.10px;top:263.00px;width:183.10px;height:10.00px;border-bottom:0.5px solid #d2d2d2;"></div>
<div class="a " style="left:385.20px;top:263.00px;width:0.60px;height:10.00px;background:#cfcfcf;"></div>
<div class="a " style="left:479.30px;top:263.00px;width:0.60px;height:10.00px;background:#cfcfcf;"></div>
<div class="t" style="top:265.37px;font-size:6.05px;left:302.90px;color:#a2a2a2;">Thermal Resistance (R)</div>
<div class="t" style="top:265.39px;font-size:6.0px;left:386.90px;color:#a2a2a2;">2.0951 (h·ft²·°F)/BTU</div>
<div class="a " style="left:302.10px;top:273.00px;width:183.10px;height:10.30px;border-bottom:0.5px solid #d2d2d2;"></div>
<div class="a " style="left:385.20px;top:273.00px;width:0.60px;height:10.30px;background:#cfcfcf;"></div>
<div class="a " style="left:479.30px;top:273.00px;width:0.60px;height:10.30px;background:#cfcfcf;"></div>
<div class="t" style="top:275.52px;font-size:6.05px;left:302.90px;color:#a2a2a2;">Thermal Mass</div>
<div class="t" style="top:275.54px;font-size:6.0px;left:386.90px;color:#a2a2a2;">76.897230 kJ/(m²·K)</div>
<div class="a " style="left:302.10px;top:283.50px;width:183.10px;height:10.00px;border-bottom:0.5px solid #d2d2d2;"></div>
<div class="a " style="left:385.20px;top:283.50px;width:0.60px;height:10.00px;background:#cfcfcf;"></div>
<div class="a " style="left:479.30px;top:283.50px;width:0.60px;height:10.00px;background:#cfcfcf;"></div>
<div class="t" style="top:285.87px;font-size:6.05px;left:302.90px;color:#1e1e1e;">Absorptance</div>
<div class="t" style="top:285.89px;font-size:6.0px;left:386.90px;color:#1e1e1e;">0.700000</div>
<div class="a " style="left:302.10px;top:293.50px;width:183.10px;height:10.30px;border-bottom:0.5px solid #d2d2d2;"></div>
<div class="a " style="left:385.20px;top:293.50px;width:0.60px;height:10.30px;background:#cfcfcf;"></div>
<div class="a " style="left:479.30px;top:293.50px;width:0.60px;height:10.30px;background:#cfcfcf;"></div>
<div class="t" style="top:296.02px;font-size:6.05px;left:302.90px;color:#1e1e1e;">Roughness</div>
<div class="t" style="top:296.04px;font-size:6.0px;left:386.90px;color:#1e1e1e;">3</div>
<div class="a " style="left:302.10px;top:305.30px;width:183.10px;height:10.00px;background:#97b3d8;border-bottom:0.5px solid #86a3c8;"></div>
<div class="t" style="top:308.31px;font-size:5.95px;left:302.90px;color:#0c0c14;font-weight:bold;">Identity Data</div>
<div class="t" style="top:307.73px;font-size:4.6px;left:482.60px;transform:translateX(-50%);color:#1a2a44;transform:translateX(-50%) rotate(90deg);font-weight:bold;">«</div>
<div class="a " style="left:302.10px;top:315.30px;width:183.10px;height:10.10px;border-bottom:0.5px solid #d2d2d2;"></div>
<div class="a " style="left:385.20px;top:315.30px;width:0.60px;height:10.10px;background:#cfcfcf;"></div>
<div class="a " style="left:479.30px;top:315.30px;width:0.60px;height:10.10px;background:#cfcfcf;"></div>
<div class="t" style="top:317.72px;font-size:6.05px;left:302.90px;color:#1e1e1e;">Type Image</div>
<div class="t" style="top:333.33px;font-size:5.38px;left:301.40px;color:#2f6fcb;text-decoration:underline;">What do these properties do?</div>
<div class="a " style="left:301.00px;top:348.30px;width:42.70px;height:11.80px;background:#e1e1e1;border:0.6px solid #bebebe;"></div>
<div class="t" style="top:352.24px;font-size:5.35px;left:322.35px;transform:translateX(-50%);color:#111;">&lt;&lt; Preview</div>
<div class="a " style="left:360.00px;top:348.30px;width:43.30px;height:11.80px;background:#e1e1e1;border:1px solid #1f7ad1;"></div>
<div class="t" style="top:352.24px;font-size:5.35px;left:381.65px;transform:translateX(-50%);color:#111;">OK</div>
<div class="a " style="left:407.00px;top:348.30px;width:42.00px;height:11.80px;background:#e1e1e1;border:0.6px solid #bebebe;"></div>
<div class="t" style="top:352.24px;font-size:5.35px;left:428.00px;transform:translateX(-50%);color:#111;">Cancel</div>
<div class="a " style="left:453.60px;top:348.30px;width:42.40px;height:11.80px;background:#e1e1e1;border:0.6px solid #bebebe;"></div>
<div class="t" style="top:352.24px;font-size:5.35px;left:474.80px;transform:translateX(-50%);color:#111;">Apply</div>
<svg style="left:0;top:0" width="800" height="427" viewBox="0 0 800 427"><polygon points="417.3,162.9 377.5,188.2 388,196.6 354.4,239.4 361.4,244 394.6,202 403.8,207.4" fill="#fe0000"/></svg>
</div></body></html>
